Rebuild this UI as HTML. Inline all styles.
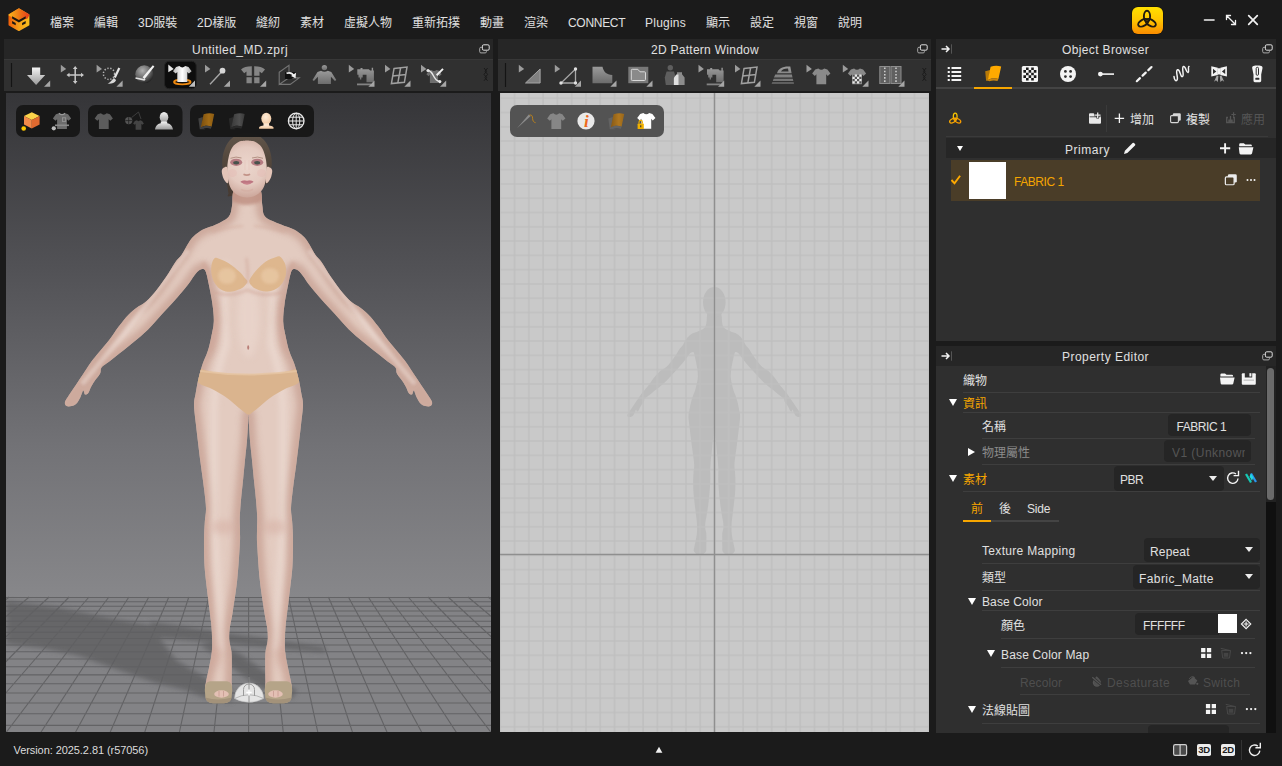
<!DOCTYPE html>
<html lang="zh-Hant">
<head>
<meta charset="utf-8">
<title>Untitled_MD.zprj</title>
<style>
*{box-sizing:border-box;margin:0;padding:0}
html,body{width:1282px;height:766px;overflow:hidden;background:#1b1b1b}
body{position:relative;font-family:"Liberation Sans","Noto Sans CJK TC",sans-serif;font-size:12px;color:#e0e0e0;line-height:16px;-webkit-font-smoothing:antialiased}
.abs{position:absolute}
.t{position:absolute;white-space:nowrap;height:16px;line-height:16px}
.menu .t{top:15px}
.panel-title{position:absolute;background:#262626;height:20px}
.panel-title .t{top:3px;width:100%;text-align:center;color:#e0e0e0}
.toolbar{position:absolute;background:#303030;border-top:1px solid #383838}
.ico{position:absolute;overflow:visible}
.sep{position:absolute;height:1px;background:#3e3e3e}
.org{color:#f5a500}
.dim{color:#5e5e5e}
.inp{position:absolute;background:#252525;border-radius:4px}
.tri-d{position:absolute;width:0;height:0;border-left:4px solid transparent;border-right:4px solid transparent;border-top:7px solid #fff}
.tri-r{position:absolute;width:0;height:0;border-top:4px solid transparent;border-bottom:4px solid transparent;border-left:7px solid #fff}
.dd{position:absolute;width:0;height:0;border-left:4px solid transparent;border-right:4px solid transparent;border-top:5.5px solid #ececec}
</style>
</head>
<body>
<!-- ===== menu bar ===== -->
<div class="menu abs" style="left:0;top:0;width:1282px;height:39px">
<svg class="ico" style="left:0;top:0" width="40" height="40" viewBox="0 0 40 40">
<defs><linearGradient id="lgT" x1="9" y1="0" x2="29" y2="0" gradientUnits="userSpaceOnUse"><stop offset="0" stop-color="#f8b41a"/><stop offset=".5" stop-color="#ec7a16"/><stop offset="1" stop-color="#e63a1c"/></linearGradient>
<linearGradient id="lgB" x1="9" y1="0" x2="29" y2="0" gradientUnits="userSpaceOnUse"><stop offset="0" stop-color="#f0600a"/><stop offset=".5" stop-color="#f6a21a"/><stop offset="1" stop-color="#f9be1c"/></linearGradient></defs>
<path d="M18.9 9.3 28.6 14.9V24.7L18.9 30.3 9.3 24.7V14.9Z" fill="url(#lgB)" stroke="url(#lgB)" stroke-width="1.6" stroke-linejoin="round"/>
<path d="M18.9 9.3 28.6 14.9 27 18 18.9 19.6 10.5 15.6 9.3 14.9Z" fill="url(#lgT)" stroke="url(#lgT)" stroke-width="1.6" stroke-linejoin="round"/>
<path d="M12.1 16.3 18.9 19.9 25.7 16.3V18.6L18.9 22.4 12.1 18.6ZM12.1 21.1 15.7 23V25.3L12.1 23.4ZM25.7 21.1 22.1 23V25.3L25.7 23.4Z" fill="#1b1712"/>
</svg>
<span class="t" style="left:50px">檔案</span>
<span class="t" style="left:94px">編輯</span>
<span class="t" style="left:138px">3D服裝</span>
<span class="t" style="left:197px">2D樣版</span>
<span class="t" style="left:256px">縫紉</span>
<span class="t" style="left:300px">素材</span>
<span class="t" style="left:344px">虛擬人物</span>
<span class="t" style="left:412px">重新拓撲</span>
<span class="t" style="left:480px">動畫</span>
<span class="t" style="left:524px">渲染</span>
<span class="t" style="left:568px;letter-spacing:-.3px">CONNECT</span>
<span class="t" style="left:645px;letter-spacing:0.23px">Plugins</span>
<span class="t" style="left:706px">顯示</span>
<span class="t" style="left:750px">設定</span>
<span class="t" style="left:794px">視窗</span>
<span class="t" style="left:838px">說明</span>
<!-- connect badge -->
<div class="abs" style="left:1132px;top:6.5px;width:30.5px;height:27px;border-radius:6px;background:linear-gradient(180deg,#ffe000 0%,#ffc400 50%,#fb8c00 100%);box-shadow:0 0 0 .5px #151005"></div>
<svg class="ico" style="left:0;top:0" width="1282" height="40" viewBox="0 0 1282 40"><g fill="none" stroke-width="1.9"><ellipse cx="1147.00" cy="16.30" rx="3.1" ry="5.6" transform="rotate(0 1147.00 16.30)" stroke="#1f1a10"/><ellipse cx="1150.72" cy="22.75" rx="3.1" ry="5.6" transform="rotate(120 1150.72 22.75)" stroke="#1f1a10"/><ellipse cx="1143.28" cy="22.75" rx="3.1" ry="5.6" transform="rotate(240 1143.28 22.75)" stroke="#1f1a10"/></g></svg>
<!-- window controls -->
<svg class="ico" style="left:1200px;top:10px" width="64" height="20" viewBox="0 0 64 20" fill="none" stroke="#f2f2f2" stroke-width="1.6" stroke-linecap="round">
<path d="M4.5 10H14"/>
<path d="M27 6 35 14M26.5 9.5V5.5H30.5M35.5 10.5V14.5H31.5" stroke-width="1.3"/>
<path d="M48.7 5.7 57.3 14.3M57.3 5.7 48.7 14.3" stroke-width="1.7"/>
</svg>
</div>
<!-- ===== 3D window ===== -->
<div class="panel-title" style="left:4px;top:39px;width:489px"><span class="t" style="left:188px;width:auto;letter-spacing:.46px">Untitled_MD.zprj</span>
<svg class="ico" style="left:475px;top:5px" width="11" height="10" viewBox="0 0 11 10" fill="none" stroke="#a8a8a8" stroke-width="1"><rect x="3.4" y=".8" width="6.8" height="5.4" rx="1.3" stroke="#dedede"/><path d="M3 3.3H1.9A1.2 1.2 0 0 0 .7 4.5V7.7A1.2 1.2 0 0 0 1.9 8.9H6.2A1.2 1.2 0 0 0 7.4 7.7V6.6"/></svg></div>
<div class="toolbar" style="left:4px;top:59px;width:489px;height:32px"></div>
<svg class="abs" style="left:6px;top:93px" width="485" height="639" viewBox="6 93 485 639">
<defs>
<linearGradient id="bg3" x1="0" y1="93" x2="0" y2="597" gradientUnits="userSpaceOnUse"><stop offset="0" stop-color="#353538"/><stop offset=".35" stop-color="#525256"/><stop offset=".7" stop-color="#727276"/><stop offset="1" stop-color="#87878a"/></linearGradient>
<linearGradient id="skinH" x1="190" y1="0" x2="307" y2="0" gradientUnits="userSpaceOnUse"><stop offset="0" stop-color="#dcbcb2"/><stop offset=".2" stop-color="#ecd6cd"/><stop offset=".5" stop-color="#efdad2"/><stop offset=".8" stop-color="#ecd6cd"/><stop offset="1" stop-color="#dcbcb2"/></linearGradient>
<filter id="bl4" filterUnits="userSpaceOnUse" x="-50" y="50" width="600" height="750"><feGaussianBlur stdDeviation="2.500"/></filter>
<filter id="bl6" filterUnits="userSpaceOnUse" x="-50" y="50" width="600" height="750"><feGaussianBlur stdDeviation="5"/></filter>
<filter id="bl2" filterUnits="userSpaceOnUse" x="-50" y="50" width="600" height="750"><feGaussianBlur stdDeviation="1.5"/></filter>
<filter id="bl3" filterUnits="userSpaceOnUse" x="-50" y="50" width="600" height="750"><feGaussianBlur stdDeviation="3"/></filter>
<filter id="bl1" filterUnits="userSpaceOnUse" x="-50" y="50" width="600" height="750"><feGaussianBlur stdDeviation=".7"/></filter>
<radialGradient id="faceG" cx="247" cy="166" r="31" gradientUnits="userSpaceOnUse"><stop offset="0" stop-color="#ebd5cc"/><stop offset=".6" stop-color="#e4cac0"/><stop offset="1" stop-color="#cda89c"/></radialGradient>
<linearGradient id="hairG" x1="0" y1="133" x2="0" y2="196" gradientUnits="userSpaceOnUse"><stop offset="0" stop-color="#62564b"/><stop offset=".4" stop-color="#54483d"/><stop offset="1" stop-color="#463a32"/></linearGradient>
<clipPath id="bodyclip"><path d="M238.0 176.0C234.2 178.5 234.2 186.0 233.2 191.0C232.2 196.0 232.8 201.7 232.0 206.0C231.2 210.3 231.2 213.9 228.5 217.0C225.8 220.1 220.2 222.4 216.0 224.5C211.8 226.6 206.7 227.6 203.0 229.5C199.3 231.4 196.4 233.8 194.0 236.0C191.6 238.2 190.6 239.8 188.5 243.0C186.4 246.2 183.7 251.8 181.5 255.0C179.3 258.2 178.1 258.2 175.5 262.0C172.9 265.8 169.3 272.4 165.7 277.6C162.1 282.8 157.6 289.1 154.0 293.3C150.4 297.6 147.0 300.8 144.2 303.1C141.4 305.4 139.9 305.2 137.3 307.2C134.7 309.1 131.6 311.6 128.5 314.8C125.4 318.0 122.0 322.4 118.7 326.6C115.5 330.9 112.2 336.1 109.0 340.3C105.8 344.5 102.2 348.4 99.2 352.0C96.2 355.6 93.9 358.2 91.3 361.8C88.7 365.4 86.1 369.7 83.5 373.6C80.9 377.5 78.3 381.4 75.7 385.3C73.1 389.2 69.6 394.2 67.8 397.1C66.0 400.0 65.1 401.0 64.9 402.5C64.7 404.0 65.4 405.4 66.5 406.0C67.6 406.6 70.0 406.4 71.7 406.0C73.4 405.6 75.0 405.0 76.5 403.5C78.0 402.0 79.4 399.2 80.5 397.0C81.6 394.8 82.5 390.9 83.2 390.5C84.0 390.1 84.2 394.1 85.0 394.5C85.8 394.9 87.3 394.2 88.3 393.0C89.3 391.8 90.0 388.9 91.0 387.0C92.0 385.1 92.8 383.6 94.3 381.4C95.8 379.2 98.9 375.9 100.1 373.6C101.3 371.3 100.0 369.5 101.5 367.5C103.0 365.5 106.1 364.1 109.0 361.8C111.9 359.6 115.5 356.6 118.7 354.0C122.0 351.4 125.2 348.8 128.5 346.2C131.8 343.6 135.0 341.1 138.3 338.3C141.6 335.5 144.8 332.8 148.1 329.5C151.4 326.2 154.6 322.3 157.9 318.7C161.2 315.1 164.4 311.6 167.7 308.0C171.0 304.4 174.2 300.9 177.5 297.2C180.8 293.4 184.6 289.0 187.3 285.5C190.1 282.0 192.1 278.5 194.0 276.0C195.9 273.5 197.2 271.6 198.9 270.5C200.6 269.4 202.7 268.7 204.0 269.3C205.3 269.9 205.7 271.4 206.5 274.0C207.3 276.6 207.8 279.5 208.8 284.6C209.8 289.7 211.7 298.2 212.5 304.4C213.3 310.6 214.0 316.4 213.8 321.8C213.6 327.2 212.3 331.7 211.3 336.7C210.3 341.7 209.1 347.1 207.6 351.6C206.1 356.2 204.1 359.4 202.6 364.0C201.1 368.6 199.6 373.9 198.4 378.9C197.2 383.9 196.3 389.4 195.6 393.8C194.9 398.2 193.9 399.8 194.0 405.0C194.1 410.2 194.9 415.4 196.0 425.0C197.1 434.6 199.1 451.8 200.5 462.6C201.9 473.4 203.3 482.3 204.2 490.0C205.1 497.7 205.9 503.3 206.0 508.6C206.1 513.9 205.1 516.8 204.8 522.0C204.5 527.2 204.0 532.5 204.0 540.0C204.0 547.5 203.9 557.0 204.6 567.0C205.3 577.0 207.2 590.3 208.3 600.0C209.4 609.7 210.7 618.3 211.3 625.0C211.9 631.7 212.0 635.5 212.1 640.0C212.2 644.5 212.3 647.3 211.8 652.0C211.3 656.7 210.0 663.0 209.0 668.0C208.0 673.0 206.6 678.3 206.0 682.0C205.4 685.7 204.5 687.7 205.5 690.0C206.5 692.3 208.9 695.0 212.0 696.0C215.1 697.0 220.8 697.0 224.0 696.0C227.2 695.0 229.7 692.5 231.0 690.0C232.3 687.5 231.5 685.2 231.6 681.0C231.7 676.8 231.8 669.8 231.8 665.0C231.8 660.2 231.9 656.2 231.5 652.0C231.1 647.8 229.6 644.0 229.3 640.0C229.0 636.0 229.2 632.7 229.8 628.0C230.4 623.3 231.5 620.0 232.7 612.0C233.9 604.0 236.0 591.2 237.2 580.0C238.4 568.8 239.3 553.3 239.8 545.0C240.3 536.7 240.0 534.7 240.0 530.0C240.0 525.3 239.6 522.0 239.8 517.0C240.0 512.0 240.5 505.6 241.0 500.0C241.5 494.4 242.0 490.2 242.7 483.5C243.4 476.8 244.3 466.9 245.0 460.0C245.7 453.1 246.4 447.6 246.9 441.8C247.4 436.0 247.7 429.5 248.0 425.0C248.3 420.5 248.3 414.6 248.5 414.6C248.7 414.6 248.7 420.5 249.0 425.0C249.3 429.5 249.6 436.0 250.1 441.8C250.6 447.6 251.3 453.1 252.0 460.0C252.7 466.9 253.6 476.8 254.3 483.5C255.0 490.2 255.5 494.4 256.0 500.0C256.5 505.6 257.0 512.0 257.2 517.0C257.4 522.0 257.0 525.3 257.0 530.0C257.0 534.7 256.7 536.7 257.2 545.0C257.7 553.3 258.6 568.8 259.8 580.0C261.0 591.2 263.1 604.0 264.3 612.0C265.5 620.0 266.6 623.3 267.2 628.0C267.8 632.7 268.0 636.0 267.7 640.0C267.4 644.0 265.9 647.8 265.5 652.0C265.1 656.2 265.2 660.2 265.2 665.0C265.2 669.8 265.3 676.8 265.4 681.0C265.5 685.2 264.7 687.5 266.0 690.0C267.3 692.5 269.8 695.0 273.0 696.0C276.2 697.0 281.9 697.0 285.0 696.0C288.1 695.0 290.5 692.3 291.5 690.0C292.5 687.7 291.6 685.7 291.0 682.0C290.4 678.3 289.0 673.0 288.0 668.0C287.0 663.0 285.7 656.7 285.2 652.0C284.7 647.3 284.8 644.5 284.9 640.0C285.0 635.5 285.1 631.7 285.7 625.0C286.3 618.3 287.6 609.7 288.7 600.0C289.8 590.3 291.7 577.0 292.4 567.0C293.1 557.0 293.0 547.5 293.0 540.0C293.0 532.5 292.5 527.2 292.2 522.0C291.9 516.8 290.9 513.9 291.0 508.6C291.1 503.3 291.9 497.7 292.8 490.0C293.7 482.3 295.1 473.4 296.5 462.6C297.9 451.8 299.9 434.6 301.0 425.0C302.1 415.4 302.9 410.2 303.0 405.0C303.1 399.8 302.1 398.2 301.4 393.8C300.7 389.4 299.8 383.9 298.6 378.9C297.4 373.9 295.9 368.6 294.4 364.0C292.9 359.4 290.8 356.2 289.4 351.6C287.9 347.1 286.7 341.7 285.7 336.7C284.7 331.7 283.4 327.2 283.2 321.8C283.0 316.4 283.7 310.6 284.5 304.4C285.3 298.2 287.2 289.7 288.2 284.6C289.2 279.5 289.7 276.6 290.5 274.0C291.3 271.4 291.7 269.9 293.0 269.3C294.3 268.7 296.4 269.4 298.1 270.5C299.8 271.6 301.1 273.5 303.0 276.0C304.9 278.5 306.9 282.0 309.7 285.5C312.4 289.0 316.2 293.4 319.5 297.2C322.8 300.9 326.0 304.4 329.3 308.0C332.6 311.6 335.8 315.1 339.1 318.7C342.4 322.3 345.6 326.2 348.9 329.5C352.2 332.8 355.4 335.5 358.7 338.3C362.0 341.1 365.2 343.6 368.5 346.2C371.8 348.8 375.1 351.4 378.3 354.0C381.6 356.6 385.1 359.6 388.0 361.8C390.9 364.1 394.0 365.5 395.5 367.5C397.0 369.5 395.7 371.3 396.9 373.6C398.1 375.9 401.2 379.2 402.7 381.4C404.2 383.6 405.0 385.1 406.0 387.0C407.0 388.9 407.7 391.8 408.7 393.0C409.7 394.2 411.1 394.9 412.0 394.5C412.9 394.1 413.1 390.1 413.8 390.5C414.6 390.9 415.4 394.8 416.5 397.0C417.6 399.2 419.0 402.0 420.5 403.5C422.0 405.0 423.6 405.6 425.3 406.0C427.0 406.4 429.4 406.6 430.5 406.0C431.6 405.4 432.3 404.0 432.1 402.5C431.9 401.0 431.0 400.0 429.2 397.1C427.4 394.2 423.9 389.2 421.3 385.3C418.7 381.4 416.1 377.5 413.5 373.6C410.9 369.7 408.3 365.4 405.7 361.8C403.1 358.2 400.8 355.6 397.8 352.0C394.9 348.4 391.2 344.5 388.0 340.3C384.8 336.1 381.6 330.9 378.3 326.6C375.1 322.4 371.6 318.0 368.5 314.8C365.4 311.6 362.3 309.1 359.7 307.2C357.1 305.2 355.6 305.4 352.8 303.1C350.0 300.8 346.6 297.6 343.0 293.3C339.4 289.1 334.9 282.8 331.3 277.6C327.7 272.4 324.1 265.8 321.5 262.0C318.9 258.2 317.7 258.2 315.5 255.0C313.3 251.8 310.6 246.2 308.5 243.0C306.4 239.8 305.4 238.2 303.0 236.0C300.6 233.8 297.7 231.4 294.0 229.5C290.3 227.6 285.8 226.6 281.0 224.5C276.2 222.4 268.6 220.1 265.5 217.0C262.4 213.9 263.1 210.3 262.4 206.0C261.6 201.7 262.1 196.0 261.0 191.0C259.9 186.0 259.8 178.5 256.0 176.0C252.2 173.5 241.8 173.5 238.0 176.0Z"/></clipPath>
</defs>
<rect x="6" y="93" width="485" height="505" fill="url(#bg3)"/>
<rect x="6" y="597.5" width="485" height="135" fill="#838386"/>
<g filter="url(#bl4)" fill="#5e5e61" opacity=".78">
<path d="M6 601 58 607.500 117 619.500 156 626.500 161 640 176 660 211 681 232 689V702L207 698.500 187 690.500 156 683 117 669.500 78 655.500 39 647.500 6 644Z"/>
<path d="M150 621.500 195 628.200 257 637.200 325 647.200V652.500L234 644 156 638Z"/>
<path d="M262 688 292 699 297 690 270 675 240 654 215 642 200 645 225 662 250 681Z"/>
</g>
<path d="M0 597.5H500M0 601.8H500M0 606.3H500M0 611.0H500M0 616.0H500M0 621.2H500M0 626.6H500M0 632.4H500M0 638.5H500M0 645.0H500M0 651.8H500M0 659.0H500M0 666.7H500M0 674.9H500M0 683.7H500M0 693.0H500M0 703.0H500M0 713.8H500M0 725.4H500M0 737.9H500M9.2 597.0L-176.9 740.0M29.2 597.0L-141.4 740.0M49.1 597.0L-105.9 740.0M69.1 597.0L-70.5 740.0M89.0 597.0L-35.0 740.0M108.9 597.0L0.4 740.0M128.9 597.0L35.9 740.0M148.8 597.0L71.3 740.0M168.8 597.0L106.8 740.0M188.8 597.0L142.2 740.0M208.7 597.0L177.7 740.0M228.7 597.0L213.1 740.0M248.6 597.0L248.6 740.0M268.6 597.0L284.1 740.0M288.5 597.0L319.5 740.0M308.4 597.0L355.0 740.0M328.4 597.0L390.4 740.0M348.4 597.0L425.9 740.0M368.3 597.0L461.3 740.0M388.2 597.0L496.8 740.0M408.2 597.0L532.2 740.0M428.1 597.0L567.7 740.0M448.1 597.0L603.1 740.0M468.0 597.0L638.6 740.0M488.0 597.0L674.1 740.0" stroke="#5f5f62" stroke-width="1.100" fill="none" opacity=".9"/>
<g id="avatar">
<path d="M247.0 133.0C244.0 133.0 240.8 133.4 238.0 134.5C235.2 135.6 232.6 137.4 230.5 139.5C228.4 141.6 226.8 144.2 225.5 147.0C224.2 149.8 223.3 153.0 222.8 156.0C222.3 159.0 222.1 162.3 222.3 165.0C222.5 167.7 223.4 169.5 224.0 172.0C224.6 174.5 225.4 177.5 226.0 180.0C226.6 182.5 227.1 184.8 227.5 187.0C227.9 189.2 227.9 191.5 228.5 193.0C229.1 194.5 224.8 197.5 231.0 196.0C237.2 194.5 259.8 186.7 266.0 184.0C272.2 181.3 267.3 182.0 268.0 180.0C268.7 178.0 269.4 174.5 270.0 172.0C270.6 169.5 271.5 167.7 271.7 165.0C271.9 162.3 271.7 159.0 271.2 156.0C270.7 153.0 269.8 149.8 268.5 147.0C267.2 144.2 265.6 141.6 263.5 139.5C261.4 137.4 258.8 135.6 256.0 134.5C253.2 133.4 250.0 133.0 247.0 133.0Z" fill="url(#hairG)"/>
<path d="M227.5 168.0C226.8 165.5 224.9 167.1 224.0 167.5C223.1 167.9 222.0 169.1 221.8 170.5C221.6 171.9 222.1 174.2 222.6 176.0C223.1 177.8 224.1 179.9 225.0 181.0C225.9 182.1 227.6 184.7 228.0 182.5C228.4 180.3 228.2 170.5 227.5 168.0Z" fill="#e3c4b8"/><path d="M266.5 168.0C267.2 165.5 269.1 167.1 270.0 167.5C270.9 167.9 272.0 169.1 272.2 170.5C272.4 171.9 271.9 174.2 271.4 176.0C270.9 177.8 269.9 179.9 269.0 181.0C268.1 182.1 266.4 184.7 266.0 182.5C265.6 180.3 265.8 170.5 266.5 168.0Z" fill="#e3c4b8"/>
<path d="M238.0 176.0C234.2 178.5 234.2 186.0 233.2 191.0C232.2 196.0 232.8 201.7 232.0 206.0C231.2 210.3 231.2 213.9 228.5 217.0C225.8 220.1 220.2 222.4 216.0 224.5C211.8 226.6 206.7 227.6 203.0 229.5C199.3 231.4 196.4 233.8 194.0 236.0C191.6 238.2 190.6 239.8 188.5 243.0C186.4 246.2 183.7 251.8 181.5 255.0C179.3 258.2 178.1 258.2 175.5 262.0C172.9 265.8 169.3 272.4 165.7 277.6C162.1 282.8 157.6 289.1 154.0 293.3C150.4 297.6 147.0 300.8 144.2 303.1C141.4 305.4 139.9 305.2 137.3 307.2C134.7 309.1 131.6 311.6 128.5 314.8C125.4 318.0 122.0 322.4 118.7 326.6C115.5 330.9 112.2 336.1 109.0 340.3C105.8 344.5 102.2 348.4 99.2 352.0C96.2 355.6 93.9 358.2 91.3 361.8C88.7 365.4 86.1 369.7 83.5 373.6C80.9 377.5 78.3 381.4 75.7 385.3C73.1 389.2 69.6 394.2 67.8 397.1C66.0 400.0 65.1 401.0 64.9 402.5C64.7 404.0 65.4 405.4 66.5 406.0C67.6 406.6 70.0 406.4 71.7 406.0C73.4 405.6 75.0 405.0 76.5 403.5C78.0 402.0 79.4 399.2 80.5 397.0C81.6 394.8 82.5 390.9 83.2 390.5C84.0 390.1 84.2 394.1 85.0 394.5C85.8 394.9 87.3 394.2 88.3 393.0C89.3 391.8 90.0 388.9 91.0 387.0C92.0 385.1 92.8 383.6 94.3 381.4C95.8 379.2 98.9 375.9 100.1 373.6C101.3 371.3 100.0 369.5 101.5 367.5C103.0 365.5 106.1 364.1 109.0 361.8C111.9 359.6 115.5 356.6 118.7 354.0C122.0 351.4 125.2 348.8 128.5 346.2C131.8 343.6 135.0 341.1 138.3 338.3C141.6 335.5 144.8 332.8 148.1 329.5C151.4 326.2 154.6 322.3 157.9 318.7C161.2 315.1 164.4 311.6 167.7 308.0C171.0 304.4 174.2 300.9 177.5 297.2C180.8 293.4 184.6 289.0 187.3 285.5C190.1 282.0 192.1 278.5 194.0 276.0C195.9 273.5 197.2 271.6 198.9 270.5C200.6 269.4 202.7 268.7 204.0 269.3C205.3 269.9 205.7 271.4 206.5 274.0C207.3 276.6 207.8 279.5 208.8 284.6C209.8 289.7 211.7 298.2 212.5 304.4C213.3 310.6 214.0 316.4 213.8 321.8C213.6 327.2 212.3 331.7 211.3 336.7C210.3 341.7 209.1 347.1 207.6 351.6C206.1 356.2 204.1 359.4 202.6 364.0C201.1 368.6 199.6 373.9 198.4 378.9C197.2 383.9 196.3 389.4 195.6 393.8C194.9 398.2 193.9 399.8 194.0 405.0C194.1 410.2 194.9 415.4 196.0 425.0C197.1 434.6 199.1 451.8 200.5 462.6C201.9 473.4 203.3 482.3 204.2 490.0C205.1 497.7 205.9 503.3 206.0 508.6C206.1 513.9 205.1 516.8 204.8 522.0C204.5 527.2 204.0 532.5 204.0 540.0C204.0 547.5 203.9 557.0 204.6 567.0C205.3 577.0 207.2 590.3 208.3 600.0C209.4 609.7 210.7 618.3 211.3 625.0C211.9 631.7 212.0 635.5 212.1 640.0C212.2 644.5 212.3 647.3 211.8 652.0C211.3 656.7 210.0 663.0 209.0 668.0C208.0 673.0 206.6 678.3 206.0 682.0C205.4 685.7 204.5 687.7 205.5 690.0C206.5 692.3 208.9 695.0 212.0 696.0C215.1 697.0 220.8 697.0 224.0 696.0C227.2 695.0 229.7 692.5 231.0 690.0C232.3 687.5 231.5 685.2 231.6 681.0C231.7 676.8 231.8 669.8 231.8 665.0C231.8 660.2 231.9 656.2 231.5 652.0C231.1 647.8 229.6 644.0 229.3 640.0C229.0 636.0 229.2 632.7 229.8 628.0C230.4 623.3 231.5 620.0 232.7 612.0C233.9 604.0 236.0 591.2 237.2 580.0C238.4 568.8 239.3 553.3 239.8 545.0C240.3 536.7 240.0 534.7 240.0 530.0C240.0 525.3 239.6 522.0 239.8 517.0C240.0 512.0 240.5 505.6 241.0 500.0C241.5 494.4 242.0 490.2 242.7 483.5C243.4 476.8 244.3 466.9 245.0 460.0C245.7 453.1 246.4 447.6 246.9 441.8C247.4 436.0 247.7 429.5 248.0 425.0C248.3 420.5 248.3 414.6 248.5 414.6C248.7 414.6 248.7 420.5 249.0 425.0C249.3 429.5 249.6 436.0 250.1 441.8C250.6 447.6 251.3 453.1 252.0 460.0C252.7 466.9 253.6 476.8 254.3 483.5C255.0 490.2 255.5 494.4 256.0 500.0C256.5 505.6 257.0 512.0 257.2 517.0C257.4 522.0 257.0 525.3 257.0 530.0C257.0 534.7 256.7 536.7 257.2 545.0C257.7 553.3 258.6 568.8 259.8 580.0C261.0 591.2 263.1 604.0 264.3 612.0C265.5 620.0 266.6 623.3 267.2 628.0C267.8 632.7 268.0 636.0 267.7 640.0C267.4 644.0 265.9 647.8 265.5 652.0C265.1 656.2 265.2 660.2 265.2 665.0C265.2 669.8 265.3 676.8 265.4 681.0C265.5 685.2 264.7 687.5 266.0 690.0C267.3 692.5 269.8 695.0 273.0 696.0C276.2 697.0 281.9 697.0 285.0 696.0C288.1 695.0 290.5 692.3 291.5 690.0C292.5 687.7 291.6 685.7 291.0 682.0C290.4 678.3 289.0 673.0 288.0 668.0C287.0 663.0 285.7 656.7 285.2 652.0C284.7 647.3 284.8 644.5 284.9 640.0C285.0 635.5 285.1 631.7 285.7 625.0C286.3 618.3 287.6 609.7 288.7 600.0C289.8 590.3 291.7 577.0 292.4 567.0C293.1 557.0 293.0 547.5 293.0 540.0C293.0 532.5 292.5 527.2 292.2 522.0C291.9 516.8 290.9 513.9 291.0 508.6C291.1 503.3 291.9 497.7 292.8 490.0C293.7 482.3 295.1 473.4 296.5 462.6C297.9 451.8 299.9 434.6 301.0 425.0C302.1 415.4 302.9 410.2 303.0 405.0C303.1 399.8 302.1 398.2 301.4 393.8C300.7 389.4 299.8 383.9 298.6 378.9C297.4 373.9 295.9 368.6 294.4 364.0C292.9 359.4 290.8 356.2 289.4 351.6C287.9 347.1 286.7 341.7 285.7 336.7C284.7 331.7 283.4 327.2 283.2 321.8C283.0 316.4 283.7 310.6 284.5 304.4C285.3 298.2 287.2 289.7 288.2 284.6C289.2 279.5 289.7 276.6 290.5 274.0C291.3 271.4 291.7 269.9 293.0 269.3C294.3 268.7 296.4 269.4 298.1 270.5C299.8 271.6 301.1 273.5 303.0 276.0C304.9 278.5 306.9 282.0 309.7 285.5C312.4 289.0 316.2 293.4 319.5 297.2C322.8 300.9 326.0 304.4 329.3 308.0C332.6 311.6 335.8 315.1 339.1 318.7C342.4 322.3 345.6 326.2 348.9 329.5C352.2 332.8 355.4 335.5 358.7 338.3C362.0 341.1 365.2 343.6 368.5 346.2C371.8 348.8 375.1 351.4 378.3 354.0C381.6 356.6 385.1 359.6 388.0 361.8C390.9 364.1 394.0 365.5 395.5 367.5C397.0 369.5 395.7 371.3 396.9 373.6C398.1 375.9 401.2 379.2 402.7 381.4C404.2 383.6 405.0 385.1 406.0 387.0C407.0 388.9 407.7 391.8 408.7 393.0C409.7 394.2 411.1 394.9 412.0 394.5C412.9 394.1 413.1 390.1 413.8 390.5C414.6 390.9 415.4 394.8 416.5 397.0C417.6 399.2 419.0 402.0 420.5 403.5C422.0 405.0 423.6 405.6 425.3 406.0C427.0 406.4 429.4 406.6 430.5 406.0C431.6 405.4 432.3 404.0 432.1 402.5C431.9 401.0 431.0 400.0 429.2 397.1C427.4 394.2 423.9 389.2 421.3 385.3C418.7 381.4 416.1 377.5 413.5 373.6C410.9 369.7 408.3 365.4 405.7 361.8C403.1 358.2 400.8 355.6 397.8 352.0C394.9 348.4 391.2 344.5 388.0 340.3C384.8 336.1 381.6 330.9 378.3 326.6C375.1 322.4 371.6 318.0 368.5 314.8C365.4 311.6 362.3 309.1 359.7 307.2C357.1 305.2 355.6 305.4 352.8 303.1C350.0 300.8 346.6 297.6 343.0 293.3C339.4 289.1 334.9 282.8 331.3 277.6C327.7 272.4 324.1 265.8 321.5 262.0C318.9 258.2 317.7 258.2 315.5 255.0C313.3 251.8 310.6 246.2 308.5 243.0C306.4 239.8 305.4 238.2 303.0 236.0C300.6 233.8 297.7 231.4 294.0 229.5C290.3 227.6 285.8 226.6 281.0 224.5C276.2 222.4 268.6 220.1 265.5 217.0C262.4 213.9 263.1 210.3 262.4 206.0C261.6 201.7 262.1 196.0 261.0 191.0C259.9 186.0 259.8 178.5 256.0 176.0C252.2 173.5 241.8 173.5 238.0 176.0Z" fill="#e3cbc0"/>
<g clip-path="url(#bodyclip)">
<path d="M238.0 176.0C234.2 178.5 234.2 186.0 233.2 191.0C232.2 196.0 232.8 201.7 232.0 206.0C231.2 210.3 231.2 213.9 228.5 217.0C225.8 220.1 220.2 222.4 216.0 224.5C211.8 226.6 206.7 227.6 203.0 229.5C199.3 231.4 196.4 233.8 194.0 236.0C191.6 238.2 190.6 239.8 188.5 243.0C186.4 246.2 183.7 251.8 181.5 255.0C179.3 258.2 178.1 258.2 175.5 262.0C172.9 265.8 169.3 272.4 165.7 277.6C162.1 282.8 157.6 289.1 154.0 293.3C150.4 297.6 147.0 300.8 144.2 303.1C141.4 305.4 139.9 305.2 137.3 307.2C134.7 309.1 131.6 311.6 128.5 314.8C125.4 318.0 122.0 322.4 118.7 326.6C115.5 330.9 112.2 336.1 109.0 340.3C105.8 344.5 102.2 348.4 99.2 352.0C96.2 355.6 93.9 358.2 91.3 361.8C88.7 365.4 86.1 369.7 83.5 373.6C80.9 377.5 78.3 381.4 75.7 385.3C73.1 389.2 69.6 394.2 67.8 397.1C66.0 400.0 65.1 401.0 64.9 402.5C64.7 404.0 65.4 405.4 66.5 406.0C67.6 406.6 70.0 406.4 71.7 406.0C73.4 405.6 75.0 405.0 76.5 403.5C78.0 402.0 79.4 399.2 80.5 397.0C81.6 394.8 82.5 390.9 83.2 390.5C84.0 390.1 84.2 394.1 85.0 394.5C85.8 394.9 87.3 394.2 88.3 393.0C89.3 391.8 90.0 388.9 91.0 387.0C92.0 385.1 92.8 383.6 94.3 381.4C95.8 379.2 98.9 375.9 100.1 373.6C101.3 371.3 100.0 369.5 101.5 367.5C103.0 365.5 106.1 364.1 109.0 361.8C111.9 359.6 115.5 356.6 118.7 354.0C122.0 351.4 125.2 348.8 128.5 346.2C131.8 343.6 135.0 341.1 138.3 338.3C141.6 335.5 144.8 332.8 148.1 329.5C151.4 326.2 154.6 322.3 157.9 318.7C161.2 315.1 164.4 311.6 167.7 308.0C171.0 304.4 174.2 300.9 177.5 297.2C180.8 293.4 184.6 289.0 187.3 285.5C190.1 282.0 192.1 278.5 194.0 276.0C195.9 273.5 197.2 271.6 198.9 270.5C200.6 269.4 202.7 268.7 204.0 269.3C205.3 269.9 205.7 271.4 206.5 274.0C207.3 276.6 207.8 279.5 208.8 284.6C209.8 289.7 211.7 298.2 212.5 304.4C213.3 310.6 214.0 316.4 213.8 321.8C213.6 327.2 212.3 331.7 211.3 336.7C210.3 341.7 209.1 347.1 207.6 351.6C206.1 356.2 204.1 359.4 202.6 364.0C201.1 368.6 199.6 373.9 198.4 378.9C197.2 383.9 196.3 389.4 195.6 393.8C194.9 398.2 193.9 399.8 194.0 405.0C194.1 410.2 194.9 415.4 196.0 425.0C197.1 434.6 199.1 451.8 200.5 462.6C201.9 473.4 203.3 482.3 204.2 490.0C205.1 497.7 205.9 503.3 206.0 508.6C206.1 513.9 205.1 516.8 204.8 522.0C204.5 527.2 204.0 532.5 204.0 540.0C204.0 547.5 203.9 557.0 204.6 567.0C205.3 577.0 207.2 590.3 208.3 600.0C209.4 609.7 210.7 618.3 211.3 625.0C211.9 631.7 212.0 635.5 212.1 640.0C212.2 644.5 212.3 647.3 211.8 652.0C211.3 656.7 210.0 663.0 209.0 668.0C208.0 673.0 206.6 678.3 206.0 682.0C205.4 685.7 204.5 687.7 205.5 690.0C206.5 692.3 208.9 695.0 212.0 696.0C215.1 697.0 220.8 697.0 224.0 696.0C227.2 695.0 229.7 692.5 231.0 690.0C232.3 687.5 231.5 685.2 231.6 681.0C231.7 676.8 231.8 669.8 231.8 665.0C231.8 660.2 231.9 656.2 231.5 652.0C231.1 647.8 229.6 644.0 229.3 640.0C229.0 636.0 229.2 632.7 229.8 628.0C230.4 623.3 231.5 620.0 232.7 612.0C233.9 604.0 236.0 591.2 237.2 580.0C238.4 568.8 239.3 553.3 239.8 545.0C240.3 536.7 240.0 534.7 240.0 530.0C240.0 525.3 239.6 522.0 239.8 517.0C240.0 512.0 240.5 505.6 241.0 500.0C241.5 494.4 242.0 490.2 242.7 483.5C243.4 476.8 244.3 466.9 245.0 460.0C245.7 453.1 246.4 447.6 246.9 441.8C247.4 436.0 247.7 429.5 248.0 425.0C248.3 420.5 248.3 414.6 248.5 414.6C248.7 414.6 248.7 420.5 249.0 425.0C249.3 429.5 249.6 436.0 250.1 441.8C250.6 447.6 251.3 453.1 252.0 460.0C252.7 466.9 253.6 476.8 254.3 483.5C255.0 490.2 255.5 494.4 256.0 500.0C256.5 505.6 257.0 512.0 257.2 517.0C257.4 522.0 257.0 525.3 257.0 530.0C257.0 534.7 256.7 536.7 257.2 545.0C257.7 553.3 258.6 568.8 259.8 580.0C261.0 591.2 263.1 604.0 264.3 612.0C265.5 620.0 266.6 623.3 267.2 628.0C267.8 632.7 268.0 636.0 267.7 640.0C267.4 644.0 265.9 647.8 265.5 652.0C265.1 656.2 265.2 660.2 265.2 665.0C265.2 669.8 265.3 676.8 265.4 681.0C265.5 685.2 264.7 687.5 266.0 690.0C267.3 692.5 269.8 695.0 273.0 696.0C276.2 697.0 281.9 697.0 285.0 696.0C288.1 695.0 290.5 692.3 291.5 690.0C292.5 687.7 291.6 685.7 291.0 682.0C290.4 678.3 289.0 673.0 288.0 668.0C287.0 663.0 285.7 656.7 285.2 652.0C284.7 647.3 284.8 644.5 284.9 640.0C285.0 635.5 285.1 631.7 285.7 625.0C286.3 618.3 287.6 609.7 288.7 600.0C289.8 590.3 291.7 577.0 292.4 567.0C293.1 557.0 293.0 547.5 293.0 540.0C293.0 532.5 292.5 527.2 292.2 522.0C291.9 516.8 290.9 513.9 291.0 508.6C291.1 503.3 291.9 497.7 292.8 490.0C293.7 482.3 295.1 473.4 296.5 462.6C297.9 451.8 299.9 434.6 301.0 425.0C302.1 415.4 302.9 410.2 303.0 405.0C303.1 399.8 302.1 398.2 301.4 393.8C300.7 389.4 299.8 383.9 298.6 378.9C297.4 373.9 295.9 368.6 294.4 364.0C292.9 359.4 290.8 356.2 289.4 351.6C287.9 347.1 286.7 341.7 285.7 336.7C284.7 331.7 283.4 327.2 283.2 321.8C283.0 316.4 283.7 310.6 284.5 304.4C285.3 298.2 287.2 289.7 288.2 284.6C289.2 279.5 289.7 276.6 290.5 274.0C291.3 271.4 291.7 269.9 293.0 269.3C294.3 268.7 296.4 269.4 298.1 270.5C299.8 271.6 301.1 273.5 303.0 276.0C304.9 278.5 306.9 282.0 309.7 285.5C312.4 289.0 316.2 293.4 319.5 297.2C322.8 300.9 326.0 304.4 329.3 308.0C332.6 311.6 335.8 315.1 339.1 318.7C342.4 322.3 345.6 326.2 348.9 329.5C352.2 332.8 355.4 335.5 358.7 338.3C362.0 341.1 365.2 343.6 368.5 346.2C371.8 348.8 375.1 351.4 378.3 354.0C381.6 356.6 385.1 359.6 388.0 361.8C390.9 364.1 394.0 365.5 395.5 367.5C397.0 369.5 395.7 371.3 396.9 373.6C398.1 375.9 401.2 379.2 402.7 381.4C404.2 383.6 405.0 385.1 406.0 387.0C407.0 388.9 407.7 391.8 408.7 393.0C409.7 394.2 411.1 394.9 412.0 394.5C412.9 394.1 413.1 390.1 413.8 390.5C414.6 390.9 415.4 394.8 416.5 397.0C417.6 399.2 419.0 402.0 420.5 403.5C422.0 405.0 423.6 405.6 425.3 406.0C427.0 406.4 429.4 406.6 430.5 406.0C431.6 405.4 432.3 404.0 432.1 402.5C431.9 401.0 431.0 400.0 429.2 397.1C427.4 394.2 423.9 389.2 421.3 385.3C418.7 381.4 416.1 377.5 413.5 373.6C410.9 369.7 408.3 365.4 405.7 361.8C403.1 358.2 400.8 355.6 397.8 352.0C394.9 348.4 391.2 344.5 388.0 340.3C384.8 336.1 381.6 330.9 378.3 326.6C375.1 322.4 371.6 318.0 368.5 314.8C365.4 311.6 362.3 309.1 359.7 307.2C357.1 305.2 355.6 305.4 352.8 303.1C350.0 300.8 346.6 297.6 343.0 293.3C339.4 289.1 334.9 282.8 331.3 277.6C327.7 272.4 324.1 265.8 321.5 262.0C318.9 258.2 317.7 258.2 315.5 255.0C313.3 251.8 310.6 246.2 308.5 243.0C306.4 239.8 305.4 238.2 303.0 236.0C300.6 233.8 297.7 231.4 294.0 229.5C290.3 227.6 285.8 226.6 281.0 224.5C276.2 222.4 268.6 220.1 265.5 217.0C262.4 213.9 263.1 210.3 262.4 206.0C261.6 201.7 262.1 196.0 261.0 191.0C259.9 186.0 259.8 178.5 256.0 176.0C252.2 173.5 241.8 173.5 238.0 176.0Z" fill="none" stroke="#bf9486" stroke-width="13" filter="url(#bl3)" opacity=".6"/>
<path d="M226 262Q222 300 226 345Q215 372 214 410L214 520 221 650M271 262Q275 300 271 345Q282 372 283 410L283 520 276 650" fill="none" stroke="#f4e8e2" stroke-width="6" filter="url(#bl3)" opacity=".5"/>
<path d="M188 250 124 334 82 384M309 250 373 334 415 384" fill="none" stroke="#f3e6e0" stroke-width="5" filter="url(#bl2)" opacity=".4"/>
<ellipse cx="248.500" cy="318" rx="11" ry="40" fill="#eddad2" filter="url(#bl3)" opacity=".5"/><path d="M214 300Q220 330 209 352M283 300Q277 330 288 352" fill="none" stroke="#cda294" stroke-width="7" filter="url(#bl3)" opacity=".45"/>
<g filter="url(#bl3)" fill="#d2a89b" opacity=".4"><ellipse cx="223" cy="527" rx="12" ry="7"/><ellipse cx="275" cy="527" rx="12" ry="7"/><ellipse cx="216" cy="655" rx="5" ry="12"/><ellipse cx="281" cy="655" rx="5" ry="12"/></g>
<path d="M229 199Q247 211 265 199L266 188 229 188Z" fill="#c09284" filter="url(#bl2)" opacity=".85"/>
<g filter="url(#bl2)" fill="none" stroke="#cfa597" opacity=".5"><path d="M243 226Q228 227 212 232M254 226Q269 227 285 232" stroke-width="2"/><path d="M203 262Q207 270 208 282M294 262Q290 270 289 282" stroke-width="5"/><path d="M214 292Q230 298 247 290Q266 298 283 292" stroke-width="3"/></g>
<path d="M198.6 369.5C201.5 367.9 206.7 371.7 215.0 372.5C223.3 373.3 237.3 374.5 248.5 374.5C259.7 374.5 273.7 373.3 282.0 372.5C290.3 371.7 295.5 367.9 298.4 369.5C301.3 371.1 301.5 378.8 299.3 382.0C297.1 385.2 289.9 386.3 285.0 389.0C280.1 391.7 274.5 394.8 270.0 398.0C265.5 401.2 261.2 405.4 258.0 408.0C254.8 410.6 252.6 412.4 251.0 413.5C249.4 414.6 249.3 414.6 248.5 414.6C247.7 414.6 247.6 414.6 246.0 413.5C244.4 412.4 242.2 410.6 239.0 408.0C235.8 405.4 231.5 401.2 227.0 398.0C222.5 394.8 216.9 391.7 212.0 389.0C207.1 386.3 199.9 385.2 197.7 382.0C195.5 378.8 195.7 371.1 198.6 369.5Z" fill="#dab48e"/>
<path d="M200 371Q248.500 378 297 371" fill="none" stroke="#e6c6a4" stroke-width="2" opacity=".8"/>
<path d="M215.3 257.8C216.8 257.2 218.8 258.6 221.0 259.5C223.2 260.4 226.1 261.7 228.3 263.0C230.6 264.3 232.6 265.9 234.5 267.5C236.4 269.1 238.4 270.7 240.0 272.3C241.6 273.9 242.8 275.4 244.0 277.0C245.2 278.6 247.5 280.0 247.5 281.6C247.5 283.2 245.4 285.2 244.0 286.5C242.6 287.8 240.8 288.7 238.8 289.5C236.8 290.3 234.2 291.2 232.0 291.5C229.8 291.8 227.7 291.8 225.7 291.4C223.7 291.0 221.7 290.2 220.0 289.0C218.3 287.8 216.6 285.8 215.3 284.0C214.0 282.2 213.1 280.2 212.4 278.0C211.7 275.8 211.3 273.5 211.2 271.0C211.1 268.5 211.3 265.2 212.0 263.0C212.7 260.8 213.8 258.4 215.3 257.8Z" fill="#deb78e"/><path d="M279.8 256.4C278.0 255.6 275.6 257.3 273.5 258.0C271.4 258.7 269.6 259.2 267.5 260.5C265.4 261.8 263.0 263.8 261.0 265.5C259.0 267.2 257.3 269.2 255.7 271.0C254.1 272.8 252.6 274.8 251.5 276.5C250.4 278.2 249.2 279.9 249.2 281.4C249.2 282.9 250.6 284.4 251.5 285.5C252.4 286.6 252.8 287.1 254.4 288.0C256.0 288.9 258.8 290.2 261.0 290.8C263.2 291.4 265.3 291.5 267.5 291.4C269.7 291.3 272.1 290.8 274.0 290.0C275.9 289.2 277.6 288.1 279.2 286.7C280.8 285.3 282.2 283.4 283.3 281.5C284.4 279.6 285.4 277.2 285.8 275.0C286.2 272.8 286.2 270.6 286.0 268.5C285.8 266.4 285.5 264.5 284.5 262.5C283.5 260.5 281.6 257.1 279.8 256.4Z" fill="#deb78e"/>
<ellipse cx="227" cy="276" rx="9" ry="8" fill="#e8c8a4" filter="url(#bl2)" opacity=".8"/><ellipse cx="270" cy="276" rx="9" ry="8" fill="#e8c8a4" filter="url(#bl2)" opacity=".8"/>
<path d="M246.500 258Q248.500 272 247.500 284" fill="none" stroke="#d2aa9c" stroke-width="2.500" filter="url(#bl2)" opacity=".6"/>
<ellipse cx="248.200" cy="347.500" rx="1" ry="2.200" fill="#b97f78"/>
</g>
<!-- shoes -->
<path d="M204.800 690Q204.800 681.500 210 681.200L227 681.200Q232.300 681.500 232.300 690L231.600 697.500Q230.500 703 224 703.200L213 703.200Q206.500 703 205.400 697.500Z" fill="#b5a488"/>
<path d="M264.700 690Q264.700 681.500 270 681.200L287 681.200Q292.200 681.500 292.200 690L291.600 697.500Q290.500 703 284 703.200L273 703.200Q266.500 703 265.300 697.500Z" fill="#b5a488"/>
<ellipse cx="221.500" cy="694" rx="7.300" ry="3.700" fill="#e3c0b4"/><ellipse cx="275.500" cy="694" rx="7.300" ry="3.700" fill="#e3c0b4"/>
<path d="M219 691v5.500M223.500 691v5.500M273.500 691v5.500M278 691v5.500" stroke="#c79a90" stroke-width=".8"/>
<path d="M205.400 697.500Q218 701.500 231.600 697.500Q230.500 703 224 703.200L213 703.200Q206.500 703 205.400 697.500ZM265.300 697.500Q278 701.500 291.600 697.500Q290.500 703 284 703.200L273 703.200Q266.500 703 265.300 697.500Z" fill="#a3927a"/>
<path d="M247.0 140.6C245.7 140.8 241.4 140.7 239.0 141.8C236.6 142.9 234.2 144.7 232.5 147.0C230.8 149.3 229.8 152.5 229.0 155.5C228.2 158.5 227.7 161.8 227.4 165.0C227.2 168.2 227.2 171.7 227.5 175.0C227.8 178.3 228.5 182.3 229.4 185.0C230.3 187.7 231.2 189.2 232.8 191.0C234.4 192.8 236.6 194.7 239.0 195.8C241.4 196.9 244.3 197.4 247.0 197.4C249.7 197.4 252.6 196.9 255.0 195.8C257.4 194.7 259.6 192.8 261.2 191.0C262.8 189.2 263.7 187.7 264.6 185.0C265.5 182.3 266.2 178.3 266.5 175.0C266.8 171.7 266.9 168.2 266.6 165.0C266.4 161.8 265.9 158.5 265.0 155.5C264.1 152.5 263.2 149.3 261.5 147.0C259.8 144.7 257.4 142.9 255.0 141.8C252.6 140.7 248.3 140.8 247.0 140.6C245.7 140.4 248.3 140.4 247.0 140.6Z" fill="url(#faceG)"/>
<g filter="url(#bl1)">
<ellipse cx="236.200" cy="162.300" rx="6" ry="3.600" fill="#ad6c76" opacity=".85"/><ellipse cx="257.200" cy="162.300" rx="6" ry="3.600" fill="#ad6c76" opacity=".85"/>
<ellipse cx="232.500" cy="173" rx="4.500" ry="4" fill="#e2aaa6" opacity=".22"/><ellipse cx="261.500" cy="173" rx="4.500" ry="4" fill="#e2aaa6" opacity=".22"/>
<path d="M243.500 174.200q3.300 1.800 6.600 0" fill="none" stroke="#b98378" stroke-width="1.600" opacity=".8"/>
<path d="M245 160v10M249 160v10" stroke="#e4c6bc" stroke-width="1.200" opacity=".5"/>
<path d="M240.500 181.700Q243.700 179.700 247 180.700 250.300 179.700 253.500 181.700 250.300 184.700 247 184.700 243.700 184.700 240.500 181.700Z" fill="#c8808a"/>
<path d="M230.500 158.300q5.500-2.300 11-.3M252 158q5.500-2 11 .3" fill="none" stroke="#9c7868" stroke-width="1" opacity=".7"/>
<path d="M241 189.500q6 3 12 0" fill="none" stroke="#d2aca0" stroke-width="1.500" opacity=".6"/>
</g>
<ellipse cx="236.200" cy="162.700" rx="3" ry="1.700" fill="#48524c"/><ellipse cx="257.200" cy="162.700" rx="3" ry="1.700" fill="#48524c"/>
<path d="M240.800 181.900H253.200" stroke="#a8626e" stroke-width=".6"/>
<!-- gizmo -->
<path d="M234.600 698.500A14.500 15.500 0 0 1 263.600 698.500Q249 706 234.600 698.500Z" fill="#e4e4e4" stroke="#c4c4c4" stroke-width=".6"/>
<path d="M234.600 698.500Q249 691 263.600 698.500" fill="none" stroke="#a8a8a8" stroke-width=".8"/>
<path d="M243.500 696V689.500A5.500 5.500 0 0 1 254.500 689.500V696" fill="none" stroke="#9a9a9a" stroke-width="1"/>
<path d="M249 677V703" stroke="#8a8a8a" stroke-width=".9"/><path d="M246.300 692.500h5.400M249 689.500v6" stroke="#fff" stroke-width="1.600"/>
</g>
</svg>
<!-- ===== 2D window ===== -->
<div class="panel-title" style="left:498px;top:39px;width:433px"><span class="t" style="left:153px;width:auto;letter-spacing:.27px">2D Pattern Window</span>
<svg class="ico" style="left:419px;top:5px" width="11" height="10" viewBox="0 0 11 10" fill="none" stroke="#a8a8a8" stroke-width="1"><rect x="3.4" y=".8" width="6.8" height="5.4" rx="1.3" stroke="#dedede"/><path d="M3 3.3H1.9A1.2 1.2 0 0 0 .7 4.5V7.7A1.2 1.2 0 0 0 1.9 8.9H6.2A1.2 1.2 0 0 0 7.4 7.7V6.6"/></svg></div>
<div class="toolbar" style="left:498px;top:59px;width:433px;height:32px"></div>
<svg class="abs" style="left:500px;top:93px" width="429" height="639" viewBox="500 93 429 639">
<defs>
<pattern id="g2" x="499.23" y="82.99" width="14.285" height="14.285" patternUnits="userSpaceOnUse"><path d="M1 0V14.3M0 1H14.3" stroke="#bfbfbf" stroke-width="1.5" fill="none"/></pattern>
</defs>
<rect x="500" y="93" width="429" height="639" fill="#c9c9c9"/>
<g fill="#bcbcbc"><path d="M709.3 308.0C707.3 309.1 707.5 312.7 707.1 315.1C706.6 317.4 706.9 320.1 706.5 322.2C706.1 324.2 706.1 325.9 704.8 327.4C703.6 328.8 700.9 329.9 698.9 330.9C696.9 331.9 694.5 332.4 692.8 333.3C691.0 334.2 689.6 335.3 688.5 336.4C687.3 337.4 686.9 338.2 685.9 339.7C684.9 341.2 683.6 343.9 682.6 345.4C681.5 346.9 681.0 346.9 679.7 348.7C678.5 350.5 676.8 353.6 675.1 356.1C673.4 358.5 671.3 361.5 669.6 363.5C667.9 365.5 666.2 367.0 664.9 368.1C663.6 369.2 662.9 369.2 661.6 370.1C660.4 371.0 658.9 372.2 657.5 373.7C656.0 375.2 654.4 377.3 652.8 379.3C651.3 381.3 649.8 383.8 648.2 385.8C646.7 387.8 645.0 389.6 643.6 391.3C642.2 393.0 641.1 394.2 639.9 395.9C638.6 397.6 637.4 399.7 636.2 401.5C634.9 403.4 633.7 405.2 632.5 407.1C631.2 408.9 629.6 411.3 628.7 412.7C627.9 414.0 627.5 414.5 627.4 415.2C627.3 415.9 627.6 416.6 628.1 416.9C628.7 417.1 629.8 417.1 630.6 416.9C631.4 416.7 632.2 416.4 632.9 415.7C633.6 415.0 634.2 413.6 634.8 412.6C635.3 411.6 635.7 409.7 636.0 409.5C636.4 409.3 636.5 411.2 636.9 411.4C637.3 411.6 638.0 411.3 638.4 410.7C638.9 410.1 639.3 408.8 639.7 407.9C640.2 407.0 640.6 406.3 641.3 405.2C642.0 404.2 643.5 402.6 644.0 401.5C644.6 400.4 644.0 399.6 644.7 398.6C645.4 397.7 646.9 397.0 648.2 395.9C649.6 394.9 651.3 393.5 652.8 392.2C654.4 391.0 655.9 389.8 657.5 388.6C659.0 387.3 660.6 386.1 662.1 384.8C663.7 383.5 665.2 382.2 666.8 380.6C668.3 379.1 669.9 377.2 671.4 375.5C672.9 373.8 674.5 372.2 676.0 370.5C677.6 368.8 679.1 367.1 680.7 365.3C682.2 363.6 684.0 361.5 685.3 359.8C686.6 358.1 687.6 356.5 688.5 355.3C689.4 354.1 690.0 353.2 690.8 352.7C691.6 352.2 692.6 351.9 693.2 352.1C693.8 352.4 694.0 353.2 694.4 354.4C694.8 355.6 695.0 357.0 695.5 359.4C696.0 361.8 696.9 365.8 697.3 368.8C697.6 371.7 698.0 374.4 697.9 377.0C697.8 379.5 697.2 381.7 696.7 384.1C696.2 386.4 695.6 389.0 694.9 391.1C694.2 393.3 693.3 394.8 692.6 397.0C691.8 399.1 691.1 401.7 690.6 404.0C690.0 406.4 689.6 409.0 689.3 411.1C688.9 413.1 688.5 413.9 688.5 416.4C688.5 418.9 688.9 421.3 689.4 425.9C690.0 430.4 690.9 438.5 691.6 443.7C692.2 448.8 692.9 453.0 693.3 456.6C693.8 460.3 694.1 462.9 694.2 465.4C694.2 468.0 693.8 469.3 693.6 471.8C693.5 474.3 693.2 476.8 693.2 480.3C693.2 483.9 693.2 488.4 693.5 493.1C693.9 497.8 694.7 504.1 695.3 508.7C695.8 513.3 696.4 517.4 696.7 520.6C697.0 523.7 697.0 525.5 697.1 527.7C697.1 529.8 697.2 531.1 696.9 533.3C696.7 535.6 696.1 538.6 695.6 540.9C695.1 543.3 694.5 545.8 694.2 547.6C693.9 549.3 693.5 550.2 693.9 551.3C694.4 552.4 695.6 553.7 697.0 554.2C698.5 554.7 701.2 554.7 702.7 554.2C704.2 553.7 705.4 552.5 706.0 551.3C706.6 550.2 706.2 549.1 706.3 547.1C706.4 545.1 706.4 541.8 706.4 539.5C706.4 537.2 706.4 535.3 706.3 533.3C706.1 531.4 705.3 529.6 705.2 527.7C705.1 525.8 705.2 524.2 705.4 522.0C705.7 519.8 706.2 518.2 706.8 514.4C707.4 510.6 708.4 504.5 708.9 499.3C709.5 494.0 710.0 486.6 710.2 482.7C710.4 478.7 710.3 477.8 710.3 475.6C710.3 473.4 710.1 471.8 710.2 469.4C710.3 467.1 710.5 464.0 710.7 461.4C711.0 458.7 711.2 456.7 711.6 453.6C711.9 450.4 712.3 445.7 712.6 442.4C713.0 439.1 713.3 436.6 713.5 433.8C713.8 431.1 713.9 428.0 714.1 425.9C714.2 423.7 714.2 420.9 714.3 420.9C714.4 420.9 714.4 423.7 714.5 425.9C714.7 428.0 714.8 431.1 715.1 433.8C715.3 436.6 715.6 439.1 716.0 442.4C716.3 445.7 716.7 450.4 717.0 453.6C717.4 456.7 717.6 458.7 717.9 461.4C718.1 464.0 718.3 467.1 718.4 469.4C718.5 471.8 718.3 473.4 718.3 475.6C718.3 477.8 718.2 478.7 718.4 482.7C718.6 486.6 719.1 494.0 719.7 499.3C720.2 504.5 721.2 510.6 721.8 514.4C722.4 518.2 722.9 519.8 723.2 522.0C723.4 524.2 723.5 525.8 723.4 527.7C723.3 529.6 722.5 531.4 722.3 533.3C722.2 535.3 722.2 537.2 722.2 539.5C722.2 541.8 722.2 545.1 722.3 547.1C722.4 549.1 722.0 550.2 722.6 551.3C723.2 552.5 724.4 553.7 725.9 554.2C727.4 554.7 730.1 554.7 731.6 554.2C733.0 553.7 734.2 552.4 734.7 551.3C735.1 550.2 734.7 549.3 734.4 547.6C734.1 545.8 733.5 543.3 733.0 540.9C732.5 538.6 731.9 535.6 731.7 533.3C731.4 531.1 731.5 529.8 731.5 527.7C731.6 525.5 731.6 523.7 731.9 520.6C732.2 517.4 732.8 513.3 733.3 508.7C733.9 504.1 734.7 497.8 735.1 493.1C735.4 488.4 735.4 483.9 735.4 480.3C735.4 476.8 735.1 474.3 735.0 471.8C734.8 469.3 734.4 468.0 734.4 465.4C734.5 462.9 734.8 460.3 735.3 456.6C735.7 453.0 736.4 448.8 737.0 443.7C737.7 438.5 738.6 430.4 739.2 425.9C739.7 421.3 740.1 418.9 740.1 416.4C740.1 413.9 739.7 413.1 739.3 411.1C739.0 409.0 738.6 406.4 738.0 404.0C737.5 401.7 736.8 399.1 736.0 397.0C735.3 394.8 734.4 393.3 733.7 391.1C733.0 389.0 732.4 386.4 731.9 384.1C731.4 381.7 730.8 379.5 730.7 377.0C730.6 374.4 731.0 371.7 731.3 368.8C731.7 365.8 732.6 361.8 733.1 359.4C733.6 357.0 733.8 355.6 734.2 354.4C734.6 353.2 734.8 352.4 735.4 352.1C736.0 351.9 737.0 352.2 737.8 352.7C738.6 353.2 739.2 354.1 740.1 355.3C741.0 356.5 742.0 358.1 743.3 359.8C744.6 361.5 746.4 363.6 747.9 365.3C749.5 367.1 751.0 368.8 752.6 370.5C754.1 372.2 755.7 373.8 757.2 375.5C758.7 377.2 760.3 379.1 761.8 380.6C763.4 382.2 764.9 383.5 766.5 384.8C768.0 386.1 769.6 387.3 771.1 388.6C772.7 389.8 774.2 391.0 775.8 392.2C777.3 393.5 779.0 394.9 780.4 395.9C781.7 397.0 783.2 397.7 783.9 398.6C784.6 399.6 784.0 400.4 784.6 401.5C785.1 402.6 786.6 404.2 787.3 405.2C788.0 406.3 788.4 407.0 788.9 407.9C789.3 408.8 789.7 410.1 790.2 410.7C790.6 411.3 791.3 411.6 791.7 411.4C792.1 411.2 792.2 409.3 792.6 409.5C792.9 409.7 793.3 411.6 793.8 412.6C794.4 413.6 795.0 415.0 795.7 415.7C796.4 416.4 797.2 416.7 798.0 416.9C798.8 417.1 799.9 417.1 800.5 416.9C801.0 416.6 801.3 415.9 801.2 415.2C801.1 414.5 800.7 414.0 799.9 412.7C799.0 411.3 797.4 408.9 796.1 407.1C794.9 405.2 793.7 403.4 792.4 401.5C791.2 399.7 790.0 397.6 788.7 395.9C787.5 394.2 786.4 393.0 785.0 391.3C783.6 389.6 781.9 387.8 780.4 385.8C778.8 383.8 777.3 381.3 775.8 379.3C774.2 377.3 772.6 375.2 771.1 373.7C769.7 372.2 768.2 371.0 767.0 370.1C765.7 369.2 765.0 369.2 763.7 368.1C762.4 367.0 760.7 365.5 759.0 363.5C757.3 361.5 755.2 358.5 753.5 356.1C751.8 353.6 750.1 350.5 748.9 348.7C747.6 346.9 747.1 346.9 746.0 345.4C745.0 343.9 743.7 341.2 742.7 339.7C741.7 338.2 741.3 337.4 740.1 336.4C739.0 335.3 737.6 334.2 735.8 333.3C734.1 332.4 731.7 331.9 729.7 330.9C727.7 329.9 725.0 328.8 723.8 327.4C722.5 325.9 722.5 324.2 722.1 322.2C721.7 320.1 722.0 317.4 721.5 315.1C721.1 312.7 721.3 309.1 719.3 308.0C717.2 306.8 711.4 306.8 709.3 308.0Z"/><ellipse cx="714.3" cy="302.3" rx="11.3" ry="15.3"/></g>
<rect x="500" y="93" width="429" height="639" fill="url(#g2)"/>
<path d="M714.5 93V732M500 554.5H929" stroke="#8f8f8f" stroke-width="1.4" fill="none"/>
</svg>
<!-- ===== Object Browser ===== -->
<div class="abs" style="left:936px;top:39px;width:340px;height:302px;background:#2f2f2f"></div>
<div class="panel-title" style="left:936px;top:39px;width:340px"><span class="t" style="left:126px;width:auto;letter-spacing:0.36px">Object Browser</span>
<svg class="ico" style="left:5px;top:5px" width="12" height="10" viewBox="0 0 12 10" fill="none" stroke="#f2f2f2" stroke-width="1.5"><path d="M.5 5H7.5M5 2 8 5 5 8" stroke-linejoin="miter"/><path d="M10.5 .3V9.7" stroke="#555" stroke-width="1"/></svg>
<svg class="ico" style="left:326px;top:5px" width="11" height="10" viewBox="0 0 11 10" fill="none" stroke="#a8a8a8" stroke-width="1"><rect x="3.4" y=".8" width="6.8" height="5.4" rx="1.3" stroke="#dedede"/><path d="M3 3.3H1.9A1.2 1.2 0 0 0 .7 4.5V7.7A1.2 1.2 0 0 0 1.9 8.9H6.2A1.2 1.2 0 0 0 7.4 7.7V6.6"/></svg></div>
<div class="abs" style="left:936px;top:87px;width:340px;height:2px;background:#444"></div>
<div class="abs" style="left:974px;top:87px;width:38px;height:2px;background:#f7a600"></div>
<!-- action row -->
<div class="abs" style="left:1106px;top:105px;width:1px;height:27px;background:#3a3a3a"></div>
<span class="t" style="left:1130px;top:112px">增加</span>
<span class="t" style="left:1186px;top:112px">複製</span>
<span class="t dim" style="left:1241px;top:112px;color:#555">應用</span>
<div class="sep" style="left:946px;top:136px;width:322px;background:#3a3a3a"></div>
<div class="abs" style="left:946px;top:138px;width:330px;height:20px;background:#262626"></div>
<div class="tri-d" style="left:957px;top:146px;border-left-width:3.5px;border-right-width:3.5px;border-top-width:5px"></div>
<span class="t" style="left:1065px;top:142px;letter-spacing:0.53px">Primary</span>
<!-- fabric row -->
<div class="abs" style="left:951px;top:160px;width:309px;height:41px;background:#4a3d28"></div>
<div class="abs" style="left:969px;top:162px;width:37px;height:37px;background:#fff"></div>
<span class="t org" style="left:1014px;top:174px;letter-spacing:-.45px">FABRIC 1</span>
<!-- ===== Property Editor ===== -->
<div class="abs" style="left:936px;top:346px;width:340px;height:387px;background:#2f2f2f"></div>
<div class="panel-title" style="left:936px;top:346px;width:340px"><span class="t" style="left:126px;width:auto;letter-spacing:0.47px">Property Editor</span>
<svg class="ico" style="left:5px;top:5px" width="12" height="10" viewBox="0 0 12 10" fill="none" stroke="#f2f2f2" stroke-width="1.5"><path d="M.5 5H7.5M5 2 8 5 5 8"/><path d="M10.5 .3V9.7" stroke="#555" stroke-width="1"/></svg>
<svg class="ico" style="left:326px;top:5px" width="11" height="10" viewBox="0 0 11 10" fill="none" stroke="#a8a8a8" stroke-width="1"><rect x="3.4" y=".8" width="6.8" height="5.4" rx="1.3" stroke="#dedede"/><path d="M3 3.3H1.9A1.2 1.2 0 0 0 .7 4.5V7.7A1.2 1.2 0 0 0 1.9 8.9H6.2A1.2 1.2 0 0 0 7.4 7.7V6.6"/></svg></div>
<!-- scrollbar -->
<div class="abs" style="left:1266px;top:366px;width:10px;height:367px;background:#101010"></div>
<div class="abs" style="left:1266px;top:366px;width:10px;height:136px;background:#222"></div>
<div class="abs" style="left:1267px;top:368px;width:7px;height:132px;border-radius:3.5px;background:#6a6a6a"></div>
<!-- rows -->
<span class="t" style="left:963px;top:373px">織物</span>
<div class="sep" style="left:963px;top:392px;width:297px"></div>
<div class="tri-d" style="left:948.5px;top:399px"></div>
<span class="t org" style="left:963px;top:396px">資訊</span>
<div class="sep" style="left:963px;top:412px;width:297px"></div>
<span class="t" style="left:982px;top:419px">名稱</span>
<div class="inp" style="left:1168px;top:414px;width:83px;height:22px"></div>
<span class="t" style="left:1176.5px;top:419px;letter-spacing:-.45px">FABRIC 1</span>
<div class="sep" style="left:982px;top:438px;width:273px"></div>
<div class="tri-r" style="left:968px;top:447.5px"></div>
<span class="t" style="left:982px;top:445px;color:#8c8c8c">物理屬性</span>
<div class="inp" style="left:1164px;top:440px;width:87px;height:22px;overflow:hidden"></div>
<span class="t" style="left:1172px;top:445px;color:#555;width:73px;overflow:hidden;letter-spacing:.45px">V1 (Unknown)</span>
<div class="sep" style="left:982px;top:464px;width:273px"></div>
<div class="tri-d" style="left:948.5px;top:475px"></div>
<span class="t org" style="left:963px;top:472px">素材</span>
<div class="inp" style="left:1114px;top:466px;width:110px;height:25px"></div>
<span class="t" style="left:1120px;top:472px;letter-spacing:-0.45px">PBR</span>
<div class="dd" style="left:1209px;top:476px"></div>
<div class="sep" style="left:963px;top:491px;width:297px"></div>
<!-- tabs -->
<span class="t org" style="left:971px;top:501px">前</span>
<span class="t" style="left:999px;top:501px">後</span>
<span class="t" style="left:1027px;top:501px;letter-spacing:-0.17px">Side</span>
<div class="abs" style="left:963px;top:520px;width:96px;height:2px;background:#444"></div>
<div class="abs" style="left:963px;top:520px;width:28px;height:2px;background:#f7a600"></div>
<!-- texture mapping -->
<span class="t" style="left:982px;top:543px;letter-spacing:0.32px">Texture Mapping</span>
<div class="inp" style="left:1144px;top:538px;width:116px;height:24px"></div>
<span class="t" style="left:1150px;top:544px;letter-spacing:0.17px">Repeat</span>
<div class="dd" style="left:1245px;top:547px"></div>
<div class="sep" style="left:982px;top:563px;width:278px"></div>
<span class="t" style="left:982px;top:570px">類型</span>
<div class="inp" style="left:1133px;top:565px;width:127px;height:24px"></div>
<span class="t" style="left:1139px;top:571px;letter-spacing:0.41px">Fabric_Matte</span>
<div class="dd" style="left:1245px;top:574px"></div>
<div class="sep" style="left:982px;top:590px;width:278px"></div>
<div class="tri-d" style="left:967.5px;top:597.5px"></div>
<span class="t" style="left:982px;top:594px;letter-spacing:0.12px">Base Color</span>
<div class="sep" style="left:982px;top:610px;width:278px"></div>
<span class="t" style="left:1001px;top:618px">顏色</span>
<div class="inp" style="left:1135px;top:613px;width:84px;height:22px;border-radius:4px 0 0 4px"></div>
<span class="t" style="left:1143px;top:618px;letter-spacing:-0.37px">FFFFFF</span>
<div class="abs" style="left:1218px;top:614px;width:19px;height:19px;background:#fff"></div>
<div class="sep" style="left:1001px;top:638px;width:254px"></div>
<div class="tri-d" style="left:986.5px;top:650px"></div>
<span class="t" style="left:1001px;top:647px;letter-spacing:0.16px">Base Color Map</span>
<div class="sep" style="left:1001px;top:667px;width:254px"></div>
<span class="t" style="left:1020px;top:675px;color:#4e4e4e;letter-spacing:0.11px">Recolor</span>
<span class="t" style="left:1107px;top:675px;color:#4e4e4e;letter-spacing:0.43px">Desaturate</span>
<span class="t" style="left:1203px;top:675px;color:#4e4e4e;letter-spacing:0.32px">Switch</span>
<div class="sep" style="left:1020px;top:694px;width:230px"></div>
<div class="tri-d" style="left:967.5px;top:705.5px"></div>
<span class="t" style="left:982px;top:702.5px">法線貼圖</span>
<div class="sep" style="left:982px;top:723px;width:278px"></div>
<div class="inp" style="left:1148px;top:725px;width:81px;height:8px;border-radius:4px 4px 0 0"></div>
<!-- ===== status bar ===== -->
<span class="t" style="left:14px;top:742px;font-size:11px;color:#dcdcdc;letter-spacing:-.07px;left:13.5px">Version: 2025.2.81 (r57056)</span>
<svg class="ico" style="left:655px;top:746px" width="8" height="8" viewBox="0 0 8 8"><path d="M4 .8 7.4 6.8H.6Z" fill="#f0f0f0"/></svg>
<svg class="ico" style="left:1170px;top:742px" width="96" height="16" viewBox="1170 742 96 16">
<rect x="1173.6" y="744.6" width="13" height="10.8" rx="1.6" fill="#4a4a4a" stroke="#cfcfcf" stroke-width="1.2"/><path d="M1180.1 744.6V755.4" stroke="#cfcfcf" stroke-width="1.2"/>
<rect x="1197" y="744" width="14" height="12" rx="1.8" fill="#ececec"/>
<rect x="1221" y="744" width="14" height="12" rx="1.8" fill="#ececec"/>
<text x="1204" y="753" font-family="Liberation Sans,sans-serif" font-weight="700" font-size="9.5" text-anchor="middle" fill="#1b1b1b" letter-spacing="-.4">3D</text>
<text x="1228" y="753" font-family="Liberation Sans,sans-serif" font-weight="700" font-size="9.5" text-anchor="middle" fill="#1b1b1b" letter-spacing="-.4">2D</text>
<path d="M1241.5 740V760" stroke="#333" stroke-width="1"/>
<path d="M1259.8 750.5999999999999A5.2 5.2 0 1 1 1257.8 746.1" fill="none" stroke="#f0f0f0" stroke-width="1.4"/><path d="M1255.4 747.7h4.9v-4.9" fill="none" stroke="#f0f0f0" stroke-width="1.4"/>
</svg>
<svg class="abs" style="left:0;top:0;pointer-events:none" width="1282" height="766" viewBox="0 0 1282 766">
<defs>
<linearGradient id="gW" x1="0" y1="0" x2="0" y2="1"><stop offset="0" stop-color="#f4f4f4"/><stop offset="1" stop-color="#9a9a9a"/></linearGradient>
<linearGradient id="gG" x1="0" y1="0" x2="0" y2="1"><stop offset="0" stop-color="#9a9a9a"/><stop offset="1" stop-color="#6c6c6c"/></linearGradient>
<radialGradient id="gS" cx=".4" cy=".3" r=".75"><stop offset="0" stop-color="#b0b0b0"/><stop offset=".55" stop-color="#6a6a6a"/><stop offset="1" stop-color="#1a1a1a"/></radialGradient>
<linearGradient id="gO" x1="0" y1="0" x2="1" y2="0"><stop offset="0" stop-color="#8f5a0c"/><stop offset=".6" stop-color="#c07e16"/><stop offset="1" stop-color="#a46a12"/></linearGradient>
<linearGradient id="gD" x1="0" y1="0" x2="1" y2="0"><stop offset="0" stop-color="#3a3a3a"/><stop offset=".6" stop-color="#505050"/><stop offset="1" stop-color="#383838"/></linearGradient>
<radialGradient id="gSk" cx=".45" cy=".35" r=".7"><stop offset="0" stop-color="#fdebd8"/><stop offset="1" stop-color="#f0c8a0"/></radialGradient>
<linearGradient id="gWs" x1="0" y1="0" x2="1" y2="0"><stop offset="0" stop-color="#b8b8b8"/><stop offset=".5" stop-color="#ffffff"/><stop offset="1" stop-color="#b0b0b0"/></linearGradient>
</defs>
<path d="M11.5 63V87M505.5 63V87" stroke="#141414" stroke-width="1.2"/>
<g fill="none" stroke="#1a1a1a" stroke-width="1"><path d="M484 68l2.6 3.2-2.6 3.2 2.6 3.2-2.6 3.2M487.6 68l-2.6 3.2 2.6 3.2-2.6 3.2 2.6 3.2"/><path d="M922.5 68l2.6 3.2-2.6 3.2 2.6 3.2-2.6 3.2M926.100 68l-2.6 3.2 2.6 3.2-2.6 3.2 2.6 3.2"/></g>
<path d="M32 67.4h8.2v7.6h5L36.1 85 27 75h5Z" fill="url(#gW)"/><path d="M50.2 80.6v6.2h-6.2Z" fill="#a6a6a6"/>
<path d="M60.8 64.8l5.4 4.3-5.4 3.4Z" fill="#9c9c9c"/><g stroke="#c8c8c8" stroke-width="1.5" fill="#c8c8c8"><path d="M68.500 75H82M75.200 68V82" /><path d="M66.500 75l3-2.300v4.600ZM84 75l-3-2.300v4.600ZM75.200 66l-2.300 3h4.600ZM75.200 84l-2.300-3h4.600Z" stroke="none"/></g>
<path d="M96.6 64.8l5.4 4.3-5.4 3.4Z" fill="#9c9c9c"/><circle cx="109" cy="73.800" r="5.600" fill="none" stroke="#b4b4b4" stroke-width="1.500" stroke-dasharray="1.300 1.700"/><path d="M118.300 67.500l2 1-4.500 9.500-2-1Z" fill="#e6e6e6"/><path d="M113.600 78.300c1.400.4 2.200 1.200 2.400 2.200-1.500 2.600-5 3.600-8.500 3.100 2.600-.7 3.800-2.700 6.100-5.300Z" fill="#d8d8d8"/><path d="M122.60000000000001 80.6v6.2h-6.2Z" fill="#a6a6a6"/>
<circle cx="144.300" cy="74.300" r="9" fill="url(#gS)"/><path d="M152.800 65.300l1.600 1.300-9.800 12.300-2-1.600Z" fill="#f2f2f2"/><path d="M135.500 78l8.600 1.800.9-.9" fill="none" stroke="#e0e0e0" stroke-width="1.600"/>
<rect x="164.600" y="61.300" width="31.600" height="27.400" rx="4.500" fill="#0d0d0d" stroke="#242424" stroke-width="1"/>
<path d="M168.3 64.6l5.4 4.3-5.4 3.4Z" fill="#e8e8e8"/><ellipse cx="182.300" cy="82" rx="8.300" ry="2.400" fill="none" stroke="#f08a10" stroke-width="1.800"/><path transform="translate(182.3 74) scale(1.0)" d="M-3 -8Q0 -5.2 3 -8L6.2 -7 9.3 -2.8 6.6 -.4 5 -2V8H-5V-2L-6.6 -.4-9.3 -2.8-6.2 -7Z" fill="url(#gWs)" /><path d="M195.0 80.6v6.2h-6.2Z" fill="#bdbdbd"/>
<path d="M205 64.8l5.4 4.3-5.4 3.4Z" fill="#9c9c9c"/><path d="M210 84.300L221 72.500" stroke="#a8a8a8" stroke-width="1.300"/><circle cx="222.500" cy="70.700" r="2.900" fill="#d6d6d6"/><path d="M230.0 80.6v6.2h-6.2Z" fill="#a6a6a6"/>
<g fill="#858585"><path d="M251.800 66.200v9.600h-5.300v-4.300l-2.300 1.700-3.200-3.700c2.500-2.200 5.600-3.200 10.800-3.300ZM254.200 66.200v9.600h5.300v-4.300l2.300 1.700 3.200-3.700c-2.500-2.200-5.600-3.200-10.800-3.300ZM246.500 77.300h5.300v6h-5.300ZM254.200 77.300h5.300v6h-5.300Z"/></g><path d="M266.2 80.6v6.2h-6.2Z" fill="#a6a6a6"/>
<path d="M279.200 72.200l9.800-6.800v12.200l-9.800 6.800ZM279.200 84.400h11l9-6.500h-10" fill="none" stroke="#747474" stroke-width="1.100"/><path d="M285 72v7h6.500l4-2.500v-4.500Z" fill="#111"/><path d="M286.500 73.300c3.500-1.200 6.300.2 7.500 2.900" fill="none" stroke="#f0f0f0" stroke-width="1.700"/><path d="M296 72.700l-.4 5.600-4.600-2.400Z" fill="#f0f0f0"/>
<g fill="url(#gG)"><circle cx="324.400" cy="67.600" r="2.700"/><path d="M321 70.800q3.400 2 6.800 0l3.500 1.300 5 8-1.400 1-4-4.300v7.200h-13v-7.200l-4 4.300-1.400-1 5-8Z"/></g>
<path d="M348.8 64.8l5.4 4.3-5.4 3.4Z" fill="#9c9c9c"/><g fill="url(#gG)"><path d="M357.3 69.300h3.200v-1.200h2v1.200h6.300l1.300 1.300h1.600v-2.800h1.400v2.800h.8v11.600h-7.400v-7.400h-3.800v2.600h-1.400v2h-1.400v-2h-1.400v-2.600h-1.200Z"/><path d="M357.0 83.600h14v1.800h-14Z"/></g><path d="M374.5 80.6v6.2h-6.2Z" fill="#a6a6a6"/>
<path d="M385 64.8l5.4 4.3-5.4 3.4Z" fill="#9c9c9c"/><g fill="none" stroke="#a0a0a0" stroke-width="1.500"><path d="M394 68.600l13-1.500-2.600 15.200-13 1.300ZM400.6 67.800l-2.800 15.300M392.7 76l13.400-1.400"/></g><path d="M410.5 80.6v6.2h-6.2Z" fill="#a6a6a6"/>
<path d="M421 64.8l5.4 4.3-5.4 3.4Z" fill="#9c9c9c"/><path transform="translate(434 76.5) scale(0.82)" d="M-3 -8Q0 -5.2 3 -8L6.2 -7 9.3 -2.8 6.6 -.4 5 -2V8H-5V-2L-6.6 -.4-9.3 -2.8-6.2 -7Z" fill="#6e6e6e" /><path d="M428 70.500c6 .5 4.500 9.500 11.500 11" fill="none" stroke="#e8e8e8" stroke-width="1.400"/><circle cx="428" cy="70.500" r="1.600" fill="#e8e8e8"/><circle cx="439.800" cy="81.600" r="1.600" fill="#e8e8e8"/><path d="M436 74.500l6.300-6.300 1.400 1.400-6.300 6.300Z" fill="#f0f0f0"/><path d="M446.2 80.6v6.2h-6.2Z" fill="#a6a6a6"/>
<path d="M518.8 64.8l5.4 4.3-5.4 3.4Z" fill="#9c9c9c"/><path d="M525.500 83h14.600V69Z" fill="#808080" stroke="#a4a4a4" stroke-width="1"/>
<path d="M554.8 64.8l5.4 4.3-5.4 3.4Z" fill="#9c9c9c"/><path d="M561 83h14.500V69Z" fill="none" stroke="#a8a8a8" stroke-width="1.300"/><g fill="#e0e0e0"><circle cx="561" cy="83" r="1.700"/><circle cx="575.500" cy="83" r="1.700"/><circle cx="575.500" cy="69" r="1.700"/></g><path d="M581.0 80.6v6.2h-6.2Z" fill="#a6a6a6"/>
<path d="M592.500 66.800h10c1 5 4 8 9.800 8.200v8.200h-19.800Z" fill="url(#gG)"/><path d="M616.5 80.6v6.2h-6.2Z" fill="#a6a6a6"/>
<rect x="628.300" y="66.800" width="20" height="16.400" fill="#787878"/><path d="M631.300 70.300q0-1 1-1h5.500l2.200 2.500h4.500q1 0 1 1v6.700q0 1-1 1h-12.200q-1 0-1-1Z" fill="#8a8a8a" stroke="#d8d8d8" stroke-width="1"/><path d="M652.5 80.6v6.2h-6.2Z" fill="#a6a6a6"/>
<g fill="#5e5e5e"><circle cx="670.300" cy="67.700" r="2.700"/><path d="M666.600 71.500h7.400l1.800 6-1 7.500h-9l-1-7.500Z"/></g><path d="M677 72.300h5v2l2.600 3.300v7.400h-11v-6.400l3.400-4.300Z" fill="#8c8c8c"/><path d="M674 77.500l2.500-3h2v10.500h-4.500Z" fill="#e0e0e0"/>
<path d="M698.5 64.8l5.4 4.3-5.4 3.4Z" fill="#9c9c9c"/><g fill="url(#gG)"><path d="M707 69.300h3.200v-1.200h2v1.200h6.300l1.300 1.300h1.600v-2.800h1.400v2.800h.8v11.600h-7.400v-7.400h-3.800v2.600h-1.400v2h-1.400v-2h-1.400v-2.600h-1.200Z"/><path d="M706.7 83.600h14v1.800h-14Z"/></g><path d="M724.2 80.6v6.2h-6.2Z" fill="#a6a6a6"/>
<path d="M735 64.8l5.4 4.3-5.4 3.4Z" fill="#9c9c9c"/><g fill="none" stroke="#a0a0a0" stroke-width="1.500"><path d="M744 68.600l13-1.500-2.600 15.200-13 1.300ZM750.6 67.800l-2.800 15.300M742.7 76l13.400-1.400"/></g><path d="M760.5 80.6v6.2h-6.2Z" fill="#a6a6a6"/>
<g fill="url(#gG)"><path d="M777 73.200c1.200-4.600 5-6.800 11.500-6.800h1.800l1.300 6.800ZM775.300 74.400h16.600l.6 3.200h-18.600ZM773.600 78.800h19.200l.5 2.200h-20.500ZM772.300 82.200h21.400l.3 1.600h-22.400Z"/></g><path d="M781 71.600c1-2 3-3 7-3l.5 3Z" fill="#303030"/>
<path d="M806.5 64.8l5.4 4.3-5.4 3.4Z" fill="#9c9c9c"/><path transform="translate(821.3 76.3) scale(0.98)" d="M-3 -8Q0 -5.2 3 -8L6.2 -7 9.3 -2.8 6.6 -.4 5 -2V8H-5V-2L-6.6 -.4-9.3 -2.8-6.2 -7Z" fill="#8a8a8a" />
<path d="M842.8 64.8l5.4 4.3-5.4 3.4Z" fill="#9c9c9c"/><path transform="translate(857 76.3) scale(0.98)" d="M-3 -8Q0 -5.2 3 -8L6.2 -7 9.3 -2.8 6.6 -.4 5 -2V8H-5V-2L-6.6 -.4-9.3 -2.8-6.2 -7Z" fill="#8a8a8a" /><rect x="852.500" y="74.500" width="9" height="9" fill="#e8e8e8"/><path d="M852.500 74.500h2.250v2.250h-2.250ZM857 74.500h2.250v2.250h-2.250ZM854.750 76.750h2.250v2.250h-2.250ZM859.250 76.750h2.250v2.250h-2.250ZM852.500 79h2.250v2.250h-2.250ZM857 79h2.250v2.250h-2.250ZM854.750 81.250h2.250v2.250h-2.250ZM859.250 81.250h2.250v2.250h-2.250Z" fill="#555"/><path d="M868.5 80.6v6.2h-6.2Z" fill="#a6a6a6"/>
<g fill="#606060" stroke="#8c8c8c" stroke-width="1"><rect x="879.800" y="66.500" width="10" height="17"/><rect x="891" y="66.500" width="10" height="17"/></g><path d="M884.800 67.500V83M896 67.500V83" stroke="#d8d8d8" stroke-width="1.400" stroke-dasharray="1.600 1.600"/><path d="M904.5 80.6v6.2h-6.2Z" fill="#a6a6a6"/>
<g fill="#171717" opacity=".96"><rect x="16" y="105" width="64" height="32" rx="7"/><rect x="88" y="105" width="94.500" height="32" rx="7"/><rect x="190" y="105" width="124" height="32" rx="7"/></g>
<path d="M31.800 112.200l7.800 3.800-7.800 3.900-7.800-3.900Z" fill="#fbd44a"/><path d="M24 116l7.800 3.900v8.600l-7.800-4Z" fill="#f28a4a"/><path d="M39.600 116l-7.800 3.900v8.600l7.800-4Z" fill="#e06a30"/><circle cx="23.700" cy="128.500" r="2.300" fill="#fcc800"/>
<path transform="translate(62 121.2) scale(0.98)" d="M-3 -8Q0 -5.2 3 -8L6.2 -7 9.3 -2.8 6.6 -.4 5 -2V8H-5V-2L-6.6 -.4-9.3 -2.8-6.2 -7Z" fill="#6c6c6c" /><path d="M55 124.500h14v1.600h-14Z" fill="#8a8a8a"/><rect x="62.500" y="117.800" width="3.200" height="3.600" fill="none" stroke="#9a9a9a" stroke-width=".8"/><path d="M59 113.300q3 2.700 6 0" fill="none" stroke="#9a9a9a" stroke-width="1.200"/><circle cx="53.800" cy="128.300" r="2.100" fill="#bdbdbd"/>
<path transform="translate(103.8 121.2) scale(0.98)" d="M-3 -8Q0 -5.2 3 -8L6.2 -7 9.3 -2.8 6.6 -.4 5 -2V8H-5V-2L-6.6 -.4-9.3 -2.8-6.2 -7Z" fill="#5c5c5c" />
<circle cx="128.700" cy="120.600" r="3.600" fill="#555"/><path d="M125.300 120.600h6.800M128.700 117.200v6.800" stroke="#222" stroke-width=".8"/><path d="M131.500 117.600l7-5.600 2.500 7" fill="none" stroke="#3c3c3c" stroke-width="1"/><path transform="translate(138.5 125) scale(0.58)" d="M-3 -8Q0 -5.2 3 -8L6.2 -7 9.3 -2.8 6.6 -.4 5 -2V8H-5V-2L-6.6 -.4-9.3 -2.8-6.2 -7Z" fill="#444" />
<g fill="url(#gW)"><ellipse cx="164" cy="117.300" rx="4.300" ry="5.200"/><path d="M160.800 121.500h6.400v1.800c2.600.6 5 1.800 5.800 6.200h-18c.8-4.400 3.200-5.600 5.800-6.200Z"/></g>
<g opacity=".82"><path d="M198.3 118.500l4.500-1.500-1 11 3.500 1.300-5.500 0Z" fill="#4a4a4a"/><path d="M203.60000000000002 114.300c3.500-1.300 7-1.600 10.600-.4l-2.600 12.800c-3.800-1.600-7-1.400-10.800.6Z" fill="url(#gO)"/><path d="M200.8 127.300c3.800-2 7-2.200 10.800-.6l-.8 2c-3-1-6-.8-8 .2Z" fill="#4a4a4a"/></g>
<path d="M228.8 118.500l4.500-1.500-1 11 3.500 1.300-5.500 0Z" fill="#2a2a2a"/><path d="M234.10000000000002 114.300c3.500-1.300 7-1.600 10.600-.4l-2.600 12.800c-3.800-1.600-7-1.400-10.800.6Z" fill="url(#gD)"/><path d="M231.3 127.300c3.800-2 7-2.200 10.800-.6l-.8 2c-3-1-6-.8-8 .2Z" fill="#2a2a2a"/>
<g fill="url(#gSk)"><ellipse cx="266.300" cy="118.600" rx="5" ry="5.800"/><path d="M263.500 123h5.600v2.600c1.400.5 3.600.6 4.400 1.600v1.600h-14.400v-1.600c.8-1 3-1.100 4.400-1.600Z"/></g>
<g fill="none" stroke="#e8e8e8" stroke-width="1"><circle cx="296.200" cy="121" r="7.800" stroke-width="1.300"/><ellipse cx="296.200" cy="121" rx="3.600" ry="7.800"/><path d="M296.200 113.200v15.600M288.400 121h15.600M289.500 117.200h13.400M289.500 124.800h13.400"/></g>
<rect x="510" y="105" width="154" height="32" rx="7" fill="#4a4a4a" opacity=".93"/>
<path d="M517 128.300l11.800-13.900 1.900 1.700Z" fill="#8c8c8c"/><path d="M529.500 115c2.200-.4 3 1 3.100 3.300.1 2.600.8 3.800 3 4.400" fill="none" stroke="#b8801c" stroke-width="1"/>
<path transform="translate(556.3 121.2) scale(0.98)" d="M-3 -8Q0 -5.2 3 -8L6.2 -7 9.3 -2.8 6.6 -.4 5 -2V8H-5V-2L-6.6 -.4-9.3 -2.8-6.2 -7Z" fill="#868686" />
<circle cx="586" cy="121" r="8.600" fill="#e9e9e9"/><text x="586.300" y="127" font-family="Liberation Serif,serif" font-style="italic" font-weight="700" font-size="17" fill="#ee6a1c" text-anchor="middle">i</text>
<g opacity=".85"><path d="M608.3 118.500l4.500-1.500-1 11 3.500 1.300-5.500 0Z" fill="#666"/><path d="M613.5999999999999 114.300c3.500-1.300 7-1.600 10.600-.4l-2.600 12.800c-3.800-1.600-7-1.400-10.800.6Z" fill="url(#gO)"/><path d="M610.8 127.300c3.800-2 7-2.200 10.800-.6l-.8 2c-3-1-6-.8-8 .2Z" fill="#666"/></g>
<path transform="translate(646.3 120.8) scale(0.98)" d="M-3 -8Q0 -5.2 3 -8L6.2 -7 9.3 -2.8 6.6 -.4 5 -2V8H-5V-2L-6.6 -.4-9.3 -2.8-6.2 -7Z" fill="#ffffff" /><rect x="637.600" y="123.600" width="6.200" height="5.400" rx=".6" fill="#f0b000"/><path d="M639 123.600v-1.500a1.700 1.700 0 0 1 3.400 0v1.500" fill="none" stroke="#f0b000" stroke-width="1.100"/><rect x="640.200" y="125.300" width="1.100" height="2" fill="#333"/>
<g fill="#f4f4f4"><path d="M947.700 67h2.100v2.100h-2.100ZM947.700 71h2.100v2.100h-2.100ZM947.700 75h2.100v2.100h-2.100ZM947.700 79h2.100v2.100h-2.100Z"/><path d="M951.500 67h9.700v2.100h-9.700ZM951.500 71h9.700v2.100h-9.700ZM951.500 75h9.700v2.100h-9.700ZM951.500 79h9.700v2.100h-9.700Z"/></g>
<path d="M985.200 71.300l5-1.300-1.800 9.500 3.500 1.600-5.800-.4Z" fill="#b87a08"/><path d="M990.600 66.700c3.300-1.200 7-1.500 10.600-.2l-2.800 12.600c-3.600-1.300-7-1-10.600.8Z" fill="#ffaa00"/><path d="M987.800 79.900c3.600-1.800 7-2.100 10.600-.8l-.9 1.900c-3-.9-6-.6-8.200.3Z" fill="#c88410"/>
<rect x="1021.800" y="66" width="16.200" height="16" rx="1.500" fill="#f4f4f4"/>
<path d="M1026.0 67.5h2.600v2.600h-2.600ZM1031.2 67.5h2.600v2.600h-2.600ZM1023.4 70.1h2.600v2.600h-2.600ZM1028.6 70.1h2.600v2.600h-2.600ZM1033.8 70.1h2.600v2.600h-2.600ZM1026.0 72.7h2.600v2.600h-2.600ZM1031.2 72.7h2.600v2.600h-2.600ZM1023.4 75.3h2.600v2.600h-2.600ZM1028.6 75.3h2.600v2.600h-2.600ZM1033.8 75.3h2.600v2.600h-2.600ZM1026.0 77.9h2.600v2.600h-2.600ZM1031.2 77.9h2.600v2.600h-2.600Z" fill="#1a1a1a"/>
<circle cx="1068" cy="74" r="8" fill="#f4f4f4"/><g fill="#2f2f2f"><circle cx="1065.400" cy="71.400" r="1.400"/><circle cx="1070.600" cy="71.400" r="1.400"/><circle cx="1065.400" cy="76.600" r="1.400"/><circle cx="1070.600" cy="76.600" r="1.400"/></g>
<circle cx="1100.400" cy="74.100" r="2.400" fill="#f4f4f4"/><path d="M1100 74.100H1114" stroke="#f4f4f4" stroke-width="1.600"/>
<path d="M1136.800 81.200L1152 66.600" stroke="#f4f4f4" stroke-width="2.200" stroke-dasharray="4.400 3.600" stroke-linecap="round"/>
<path d="M1174 76.500c.3 4 2.300 5.300 3.300 3 .9-2.200-2.200-8.700.2-9.700 2.400-.9 2.900 7.600 5 6.700 2.100-.9-1.400-9.200 1-10 2.300-.7 2.700 6.700 4.600 6 1.400-.6-.6-5.600 .9-6" fill="none" stroke="#f4f4f4" stroke-width="1.500" stroke-linecap="round"/>
<g fill="#f4f4f4"><path d="M1211.300 66.200l6.500 1.600v7.200l-6.500 1.600ZM1226.900 66.200l-6.500 1.600v7.200l6.500 1.600ZM1217.900 68.300h2.400v6.200h-2.400Z"/></g><g fill="#2f2f2f"><path d="M1213 68.800l3.300 2.600-3.300 2.600ZM1225.200 68.800l-3.300 2.600 3.300 2.600Z"/></g><g fill="#a8a8a8"><path d="M1216.800 75.500l1.600.4-.6 6-1.800-1.600-2 1.400ZM1221.400 75.500l-1.600.4.600 6 1.800-1.600 2 1.400Z"/></g>
<path d="M1253.500 66c2.300-.6 5.400-.6 7.700 0 1 .3 1.500 1.200 1.300 2.200l-1.300 6.300v6.300c0 .8-.6 1.400-1.400 1.400h-4.900c-.8 0-1.400-.6-1.400-1.400v-6.300l-1.300-6.300c-.2-1 .3-1.900 1.300-2.200Z" fill="#f4f4f4"/><rect x="1256.200" y="67.300" width="2.300" height="8" rx="1.100" fill="#f4f4f4" stroke="#2f2f2f" stroke-width="1"/><rect x="1255.300" y="77.800" width="4.100" height="2" rx=".6" fill="#2f2f2f"/>
<g fill="none" stroke-width="1.25"><ellipse cx="955.20" cy="116.60" rx="1.9" ry="3.5" transform="rotate(0 955.20 116.60)" stroke="#f8c400"/><ellipse cx="957.54" cy="120.65" rx="1.9" ry="3.5" transform="rotate(120 957.54 120.65)" stroke="#f59a00"/><ellipse cx="952.86" cy="120.65" rx="1.9" ry="3.5" transform="rotate(240 952.86 120.65)" stroke="#f8a800"/></g>
<path d="M1089 114.200q0-1 1-1h3.600l1.400 1.500h5q1 0 1 1v7q0 1-1 1h-10q-1 0-1-1Z" fill="#e8e8e8"/><path d="M1089.600 116.800h10.800" stroke="#2f2f2f" stroke-width=".8"/><path d="M1097.700 112v6.400M1094.500 115.200h6.400" stroke="#2f2f2f" stroke-width="2.600"/><path d="M1097.700 112.400v5.600M1094.900 115.200h5.600" stroke="#e8e8e8" stroke-width="1.300"/>
<path d="M1119.400 113.600v9.400M1114.700 118.300h9.400" stroke="#f4f4f4" stroke-width="1.300"/>
<g transform="translate(1170 113) scale(1)"><rect x="2.800" y=".300" width="8" height="7.400" rx="1.300" fill="#d8d8d8"/><rect x=".600" y="2.600" width="7.800" height="7" rx="1" fill="#2f2f2f" stroke="#d8d8d8" stroke-width="1.100"/></g>
<g fill="none" stroke="#555" stroke-width="1.300"><path d="M1228 117.500h-1.300v5h7.600v-5h-1.300M1230.500 116v4.500"/><path d="M1233.600 112.300v4.400M1231.400 114.500h4.400" stroke-width="1.100"/></g><rect x="1228.300" y="119.500" width="4.400" height="2.500" fill="#555"/>
<path d="M1124 154l.9-3.300 7.700-7.700q.7-.7 1.400 0l1 1q.7.700 0 1.400l-7.700 7.700Z" fill="#f4f4f4"/>
<path d="M1225.100 143.200v10.200M1220 148.300h10.200" stroke="#f4f4f4" stroke-width="1.900"/>
<g transform="translate(1239.2 142.8)" fill="#f4f4f4"><path d="M0 1.600q0-1.200 1.200-1.200H4.600l1.500 1.400h5.400q1.200 0 1.200 1.100v.6H0Z"/><path d="M-.4 4.400h14.600l-1.300 6.100q-.2 1.100-1.300 1.100H1.500q-1.100 0-1.200-1.100Z"/></g>
<path d="M951.500 180l3 3.300 5.600-7.600" fill="none" stroke="#ffaa00" stroke-width="1.900"/>
<g transform="translate(1224.7 174) scale(1.12)"><rect x="2.800" y=".300" width="8" height="7.400" rx="1.300" fill="#ececec"/><rect x=".600" y="2.600" width="7.800" height="7" rx="1" fill="#4a3d28" stroke="#ececec" stroke-width="1.100"/></g>
<g fill="#f4f4f4"><circle cx="1247.500" cy="180" r="1"/><circle cx="1251" cy="180" r="1"/><circle cx="1254.500" cy="180" r="1"/></g>
<g transform="translate(1220.4 373)" fill="#f4f4f4"><path d="M0 1.600q0-1.200 1.200-1.200H4.600l1.500 1.400h5.400q1.200 0 1.200 1.100v.6H0Z"/><path d="M-.4 4.400h14.600l-1.300 6.100q-.2 1.100-1.300 1.100H1.500q-1.100 0-1.200-1.100Z"/></g>
<path d="M1241.800 374.200q0-1 1-1h12q1 0 1 1v9.600q0 1-1 1h-12q-1 0-1-1Z" fill="#f4f4f4"/><rect x="1244.800" y="372.700" width="7.400" height="4.800" fill="#2f2f2f"/><rect x="1249.400" y="373.200" width="2" height="3.300" fill="#f4f4f4"/><rect x="1243.600" y="379.600" width="10.400" height="1.100" fill="#bbb"/>
<path d="M1238.0 478.5A5.2 5.2 0 1 1 1236.0 474.0" fill="none" stroke="#f4f4f4" stroke-width="1.4"/><path d="M1233.6 475.6h4.9v-4.9" fill="none" stroke="#f4f4f4" stroke-width="1.4"/>
<path d="M1246 474l5 8.500" stroke="#16c8b4" stroke-width="2.300"/><path d="M1251 473.500l5 8.500" stroke="#2a96ee" stroke-width="2.300"/><path d="M1251 473.500l2.300 4-1.300 3.200-2.500-4.300Z" fill="#20d8e0"/>
<g fill="none" stroke="#f4f4f4" stroke-width="1.100"><path d="M1246.100 619.300l4.700 4.700-4.700 4.700-4.700-4.700Z"/><path d="M1246.100 621.500v5M1243.600 624h5"/></g>
<path d="M1201.1 648h4.300v4.300h-4.300ZM1206.8999999999999 648h4.300v4.300h-4.300ZM1201.1 653.8h4.300v4.300h-4.300ZM1206.8999999999999 653.8h4.300v4.300h-4.300Z" fill="#f4f4f4"/><g fill="none" stroke="#484848" stroke-width="1"><path d="M1220.7 648.3l9.500 2.300"/><path d="M1221.7 650.4h8.800l-1 7.600h-6.800Z"/></g><rect x="1223.7" y="652.8" width="4.600" height="4" fill="#444"/><g fill="#f4f4f4"><circle cx="1242" cy="653.1" r="1.150"/><circle cx="1246.2" cy="653.1" r="1.150"/><circle cx="1250.4" cy="653.1" r="1.150"/></g>
<path d="M1205.9 704h4.300v4.300h-4.300ZM1211.7 704h4.300v4.300h-4.300ZM1205.9 709.8h4.300v4.300h-4.300ZM1211.7 709.8h4.300v4.300h-4.300Z" fill="#f4f4f4"/><g fill="none" stroke="#484848" stroke-width="1"><path d="M1225.7 704.3l9.500 2.300"/><path d="M1226.7 706.4h8.800l-1 7.600h-6.800Z"/></g><rect x="1228.7" y="708.8" width="4.600" height="4" fill="#444"/><g fill="#f4f4f4"><circle cx="1246.9" cy="709.1" r="1.150"/><circle cx="1251.1000000000001" cy="709.1" r="1.150"/><circle cx="1255.3000000000002" cy="709.1" r="1.150"/></g>
<g fill="none" stroke="#555" stroke-width="1.300"><path d="M1096.700 677.300c2.600 2.500 3.700 4 3.700 5.300a3.500 3.500 0 0 1-7 0c0-1.300 1-2.800 3.300-5.300Z" fill="#505050"/><path d="M1092.300 677.300l8.800 7.500" stroke="#2f2f2f" stroke-width="2.600"/><path d="M1092.300 677.300l8.800 7.500"/></g>
<g fill="#555"><path d="M1188 681l5.300-4.200 4 3.800-2.300 3.800h-5Z"/><circle cx="1197.300" cy="683.800" r="1.100"/></g><path d="M1189.300 678.800c1-2 3.500-2.700 5.500-1.300" fill="none" stroke="#555" stroke-width="1"/>
</svg>
</body></html>
